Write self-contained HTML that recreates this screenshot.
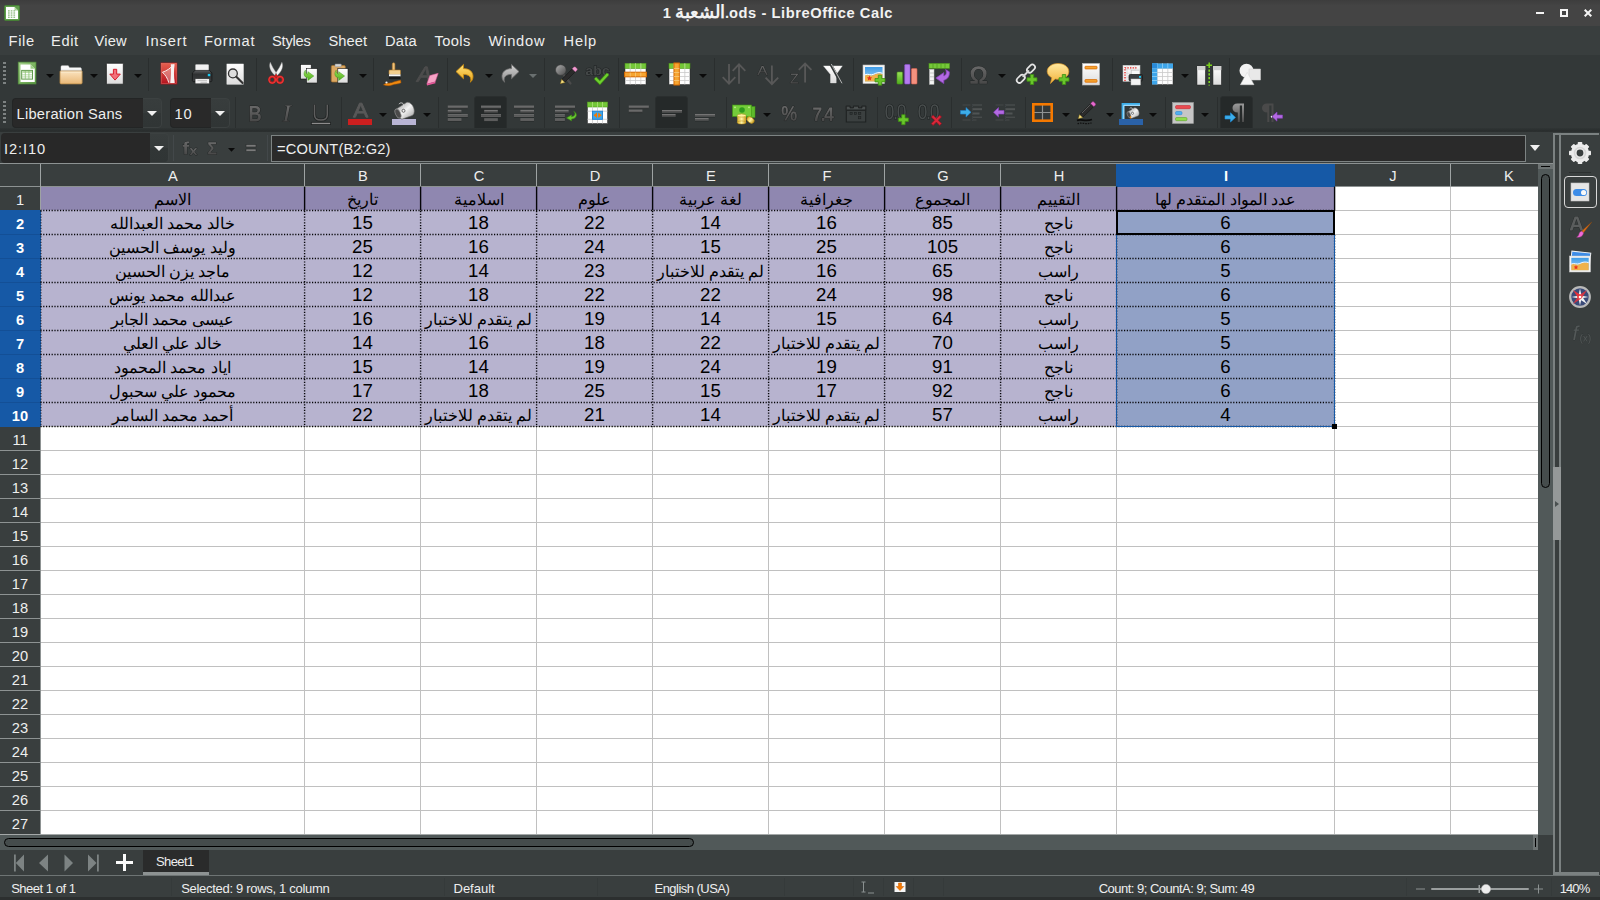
<!DOCTYPE html>
<html><head><meta charset="utf-8"><title>LibreOffice Calc</title>
<style>
*{box-sizing:border-box;margin:0;padding:0}
html,body{width:1600px;height:900px;overflow:hidden;background:#333838}
body{font-family:"Liberation Sans",sans-serif;color:#eeeeee;position:relative;font-size:14.67px}
.a{position:absolute}
.t{position:absolute;white-space:nowrap;line-height:1}
#title{left:0;top:0;width:1600px;height:26px;background:linear-gradient(#3d3d3d,#444 22%,#444)}
#menu{left:0;top:26px;width:1600px;height:29px;background:#393e3e}
#tb{left:0;top:55px;width:1600px;height:77px;background:#333838}
#fbar{left:0;top:132px;width:1561px;height:32px;background:#393e3e}
.sep{position:absolute;width:1px;background:#2a2e2e}
.arr{position:absolute;width:0;height:0;border-left:4px solid transparent;border-right:4px solid transparent;border-top:4px solid #0a0a0a}
.arrw{position:absolute;width:0;height:0;border-left:5.5px solid transparent;border-right:5.5px solid transparent;border-top:5.5px solid #f0f0f0}
.act{position:absolute;background:#252929;border:1px solid #2a2e2e;border-radius:3px}
.ic{position:absolute;width:24px;height:24px;overflow:visible}
.hc{position:absolute;top:164px;height:22px;padding-left:1px;background:#393e3e;text-align:center;font-size:14.67px;line-height:24px;color:#eee;overflow:hidden}
.rh{position:absolute;left:0;width:40px;height:23px;text-align:center;font-size:14.67px;line-height:26px;color:#eee;overflow:hidden}
.c{position:absolute;height:23px;text-align:center;color:#000;font-size:18.67px;line-height:23px;white-space:nowrap;overflow:hidden}
.c.ar{direction:rtl;font-size:16px;line-height:25px}
.st{position:absolute;top:882px;font-size:13px;white-space:nowrap;line-height:14px;color:#eee}
</style></head>
<body>
<svg width="0" height="0" style="position:absolute"><defs><linearGradient id="gPaper" x1="0" y1="0" x2="0" y2="1"><stop offset="0" stop-color="#ffffff"/><stop offset="1" stop-color="#dcdcdc"/></linearGradient>
<linearGradient id="gFold" x1="0" y1="0" x2="0" y2="1"><stop offset="0" stop-color="#fbe3bf"/><stop offset="1" stop-color="#e9b877"/></linearGradient>
<linearGradient id="gPdf" x1="0" y1="0" x2="0" y2="1"><stop offset="0" stop-color="#e8604f"/><stop offset="1" stop-color="#b3121f"/></linearGradient>
<linearGradient id="gUndo" x1="0" y1="0" x2="0" y2="1"><stop offset="0" stop-color="#ffe27a"/><stop offset="1" stop-color="#e8a317"/></linearGradient>
<linearGradient id="gRedo" x1="0" y1="0" x2="0" y2="1"><stop offset="0" stop-color="#d2d2d2"/><stop offset="1" stop-color="#8e8e8e"/></linearGradient>
<linearGradient id="gGreen" x1="0" y1="0" x2="0" y2="1"><stop offset="0" stop-color="#9be05a"/><stop offset="1" stop-color="#4fae1c"/></linearGradient>
<linearGradient id="gSky" x1="0" y1="0" x2="0" y2="1"><stop offset="0" stop-color="#3f9be6"/><stop offset="1" stop-color="#9fd4f4"/></linearGradient>
<linearGradient id="gBub" x1="0" y1="0" x2="0" y2="1"><stop offset="0" stop-color="#ffe9a0"/><stop offset="1" stop-color="#f2b33d"/></linearGradient>
<linearGradient id="gMetal" x1="0" y1="0" x2="1" y2="1"><stop offset="0" stop-color="#8c8c8c"/><stop offset="0.5" stop-color="#f4f4f4"/><stop offset="1" stop-color="#9a9a9a"/></linearGradient>
<linearGradient id="gBall" x1="0" y1="0" x2="1" y2="1"><stop offset="0" stop-color="#b0b0b0"/><stop offset="1" stop-color="#4a4a4a"/></linearGradient>
<linearGradient id="gNew" x1="0" y1="0" x2="1" y2="1"><stop offset="0" stop-color="#a5d08c"/><stop offset="0.5" stop-color="#7db562"/><stop offset="1" stop-color="#5a9644"/></linearGradient>
<linearGradient id="gPrn" x1="0" y1="0" x2="0" y2="1"><stop offset="0" stop-color="#5a5c5e"/><stop offset="0.35" stop-color="#2f3132"/><stop offset="1" stop-color="#3a3c3e"/></linearGradient>
<linearGradient id="gGray" x1="0" y1="0" x2="0" y2="1"><stop offset="0" stop-color="#686868"/><stop offset="1" stop-color="#484848"/></linearGradient>
<linearGradient id="gGold" x1="0" y1="0" x2="1" y2="0"><stop offset="0" stop-color="#d8b02a"/><stop offset="0.5" stop-color="#fff3a8"/><stop offset="1" stop-color="#c99a1a"/></linearGradient></defs></svg>
<div class="a" id="title">
<svg class="a" style="left:4px;top:5px" width="16" height="16" viewBox="0 0 16 16"><rect x="0.500" y="0.500" width="15" height="15" rx="1" fill="#5f9c4b" stroke="#467f36"/><path d="M2 2h8.500l3.500 3.500v8.500H2z" fill="#fff"/><path d="M10.500 2l3.500 3.500h-3.500z" fill="#a8d496"/><g fill="#6aa556"><rect x="4" y="5.400" width="1.700" height="1"/><rect x="6.700" y="5.400" width="1.700" height="1"/><rect x="9.400" y="5.400" width="1.700" height="1"/><rect x="4" y="7.500" width="1.700" height="1"/><rect x="6.700" y="7.500" width="1.700" height="1"/><rect x="9.400" y="7.500" width="1.700" height="1"/><rect x="4" y="9.600" width="1.700" height="1"/><rect x="6.700" y="9.600" width="1.700" height="1"/><rect x="9.400" y="9.600" width="1.700" height="1"/><rect x="4" y="11.700" width="1.700" height="1"/><rect x="6.700" y="11.700" width="1.700" height="1"/><rect x="9.400" y="11.700" width="1.700" height="1"/></g></svg>
<div class="t" id="ttl" style="right:707px;top:6px;font-weight:bold;font-size:14.67px;letter-spacing:0.57px;color:#f2f2f2"><span style="letter-spacing:0;font-size:17.6px;line-height:0">الشعبة</span> 1.ods - LibreOffice Calc</div>
<div class="a" style="left:1536px;top:12px;width:8px;height:2px;background:#f4f4f4"></div>
<div class="a" style="left:1560px;top:9px;width:8px;height:8px;border:2px solid #f4f4f4"></div>
<svg class="a" style="left:1584px;top:9px" width="8" height="8" viewBox="0 0 8 8"><path d="M0.7 0.7L7.3 7.3M7.3 0.7L0.7 7.3" stroke="#f4f4f4" stroke-width="2"/></svg>
</div>
<div class="a" id="menu">
<div class="t mi" style="left:8.5px;top:8px;letter-spacing:0.68px">File</div>
<div class="t mi" style="left:51.0px;top:8px;letter-spacing:0.61px">Edit</div>
<div class="t mi" style="left:94.5px;top:8px;letter-spacing:0.19px">View</div>
<div class="t mi" style="left:145.5px;top:8px;letter-spacing:0.88px">Insert</div>
<div class="t mi" style="left:204.0px;top:8px;letter-spacing:0.83px">Format</div>
<div class="t mi" style="left:272.0px;top:8px;letter-spacing:-0.22px">Styles</div>
<div class="t mi" style="left:328.5px;top:8px;letter-spacing:0.07px">Sheet</div>
<div class="t mi" style="left:385.0px;top:8px;letter-spacing:0.23px">Data</div>
<div class="t mi" style="left:434.5px;top:8px;letter-spacing:0.4px">Tools</div>
<div class="t mi" style="left:488.5px;top:8px;letter-spacing:0.79px">Window</div>
<div class="t mi" style="left:563.5px;top:8px;letter-spacing:0.84px">Help</div>
</div>
<div class="a" id="tb">
<div class="a" style="left:3px;top:7px;width:3px;height:23px;background:repeating-linear-gradient(#7d8282 0 2px,transparent 2px 4px)"></div>
<div class="a" style="left:3px;top:46px;width:3px;height:23px;background:repeating-linear-gradient(#7d8282 0 2px,transparent 2px 4px)"></div>
<svg class="ic" style="left:15px;top:7px" viewBox="0 0 24 24"><rect x="3.200" y="0.100" width="17.800" height="21.900" fill="url(#gNew)" stroke="#4f8a3a" stroke-width="0.700"/><path d="M5.500 2.400h10l4.250 4.250V20H5.500z" fill="#fff"/><path d="M15.500 2.400l4.250 4.250H15.500z" fill="#9fcf88"/><rect x="6.700" y="8.400" width="10.800" height="8.700" fill="#fff" stroke="#5f9a4a" stroke-width="1"/><rect x="7.200" y="8.900" width="9.800" height="2" fill="#b9dba6"/><path d="M7 12.800h10.200M7 14.900h10.200" stroke="#a9d396" stroke-width="0.800"/><path d="M10.300 9v8M13.900 9v8" stroke="#8cc474" stroke-width="0.800"/></svg>
<div class="arr" style="left:45.5px;top:19px"></div>
<svg class="ic" style="left:59px;top:7px" viewBox="0 0 24 24"><path d="M2 5c0-.8.400-1.300 1-1.300h6.300l1.200 2H21.300c.6 0 1 .4 1 1V10H2z" fill="#fbfbfb" stroke="#dcdcdc" stroke-width="0.500"/><path d="M2 7.500h20.300V10H2z" fill="#e4e6ea"/><path d="M1.600 9h21c.3 0 .5.200.5.500V21c0 .5-.4.900-1 .900H2c-.6 0-1-.4-1-.9V9.500c0-.3.300-.5.600-.5z" fill="url(#gFold)" stroke="#b98c4a" stroke-width="0.800"/><path d="M1.800 10.100h20.500" stroke="#fdf0d8" stroke-width="0.700"/></svg>
<div class="arr" style="left:89.7px;top:19px"></div>
<svg class="ic" style="left:103px;top:7px" viewBox="0 0 24 24"><rect x="3.400" y="1.300" width="16.900" height="20.900" rx="0.800" fill="url(#gPaper)" stroke="#151717" stroke-width="0.700"/><path d="M10.400 7.300h3.300v4.800h3.600l-5.250 6-5.250-6h3.600z" fill="#f2707a" stroke="#d81c2c" stroke-width="1" stroke-linejoin="round"/></svg>
<div class="arr" style="left:133.6px;top:19px"></div>
<div class="sep" style="left:148px;top:3px;height:33px"></div>
<svg class="ic" style="left:157px;top:7px" viewBox="0 0 24 24"><rect x="3.900" y="0.900" width="16.100" height="21.200" fill="url(#gPdf)" stroke="#9e1420" stroke-width="0.600"/><rect x="4.700" y="1.700" width="14.500" height="19.600" fill="none" stroke="#f08a78" stroke-width="0.500" opacity="0.700"/><path d="M17 2.300C14 6 10 8.500 5.400 10.300c3 2.500 5 6 6.300 10.500l6-.2c-1-6-1-12 0-18.300z" fill="#fff" opacity="0.300"/><path d="M13.800 2.200c1-.1 2.800-.1 3.700 0-.8 6-.7 12.500.2 18.800l-4.500.1c.9-6 1-12.500.6-18.900z" fill="#f8f0f0"/><path d="M16.500 2.500C14 6 10 8.700 5.400 10.300c3 2.400 5.200 6 6.400 10.400" fill="none" stroke="#fbeaea" stroke-width="1"/></svg>
<svg class="ic" style="left:190px;top:7px" viewBox="0 0 24 24"><rect x="5.800" y="2.800" width="12.600" height="6.500" fill="#f2f2f2" stroke="#fdfdfd" stroke-width="0.500"/><path d="M5 8.400h14.500l2.400 2.500v7.700c0 .6-.4 1-1 1H3.400c-.6 0-1-.4-1-1v-7.700z" fill="url(#gPrn)" stroke="#111313" stroke-width="0.700"/><rect x="17.800" y="11.900" width="2.500" height="2.300" fill="#19c8f0"/><rect x="5.100" y="16.800" width="14.200" height="5" fill="#f4f4f4" stroke="#2a2c2c" stroke-width="0.500"/><path d="M7.500 18.600h9.500M10.500 20.300h6.500" stroke="#b8b8b8" stroke-width="0.800"/></svg>
<svg class="ic" style="left:223px;top:7px" viewBox="0 0 24 24"><rect x="3.900" y="2" width="16.500" height="20.200" fill="url(#gPaper)" stroke="#f4f4f4" stroke-width="0.500"/><circle cx="9.900" cy="11.400" r="4.400" fill="#dedede" stroke="#333" stroke-width="1.300"/><path d="M13.300 14.800l6.300 6.300" stroke="#333" stroke-width="2.100" stroke-linecap="round"/></svg>
<div class="sep" style="left:255.5px;top:3px;height:33px"></div>
<svg class="ic" style="left:264px;top:7px" viewBox="0 0 24 24"><path d="M6.300 0.200c-1.600 3.500-.5 8.500 4.700 13.300l1.700-2C10 7.500 7.600 3.500 6.300 0.200z" fill="#e6e6e6" stroke="#9a9a9a" stroke-width="0.400"/><path d="M17.900 0.200c1.600 3.500.5 8.500-4.700 13.300l-1.700-2c2.700-4 5.100-8 6.400-11.300z" fill="#f6f6f6" stroke="#9a9a9a" stroke-width="0.400"/><path d="M11.400 11.200h1.400v4h-1.400z" fill="#7a7a7a"/><g fill="none" stroke="#d41818" stroke-width="2.300"><ellipse cx="8.200" cy="17.800" rx="3" ry="3.100"/><ellipse cx="16" cy="17.800" rx="3" ry="3.100"/></g><g fill="none" stroke="#f05a5a" stroke-width="0.600"><ellipse cx="8.200" cy="17.800" rx="3.300" ry="3.400"/><ellipse cx="16" cy="17.800" rx="3.300" ry="3.400"/></g><path d="M10.600 15.300l1.500-2.200 1.500 2.200" fill="none" stroke="#d41818" stroke-width="1.600"/></svg>
<svg class="ic" style="left:297px;top:7px" viewBox="0 0 24 24"><rect x="3.600" y="2.500" width="10.600" height="14.500" fill="url(#gPaper)" stroke="#151717" stroke-width="0.600"/><rect x="9.500" y="6.600" width="10.700" height="14.400" fill="url(#gPaper)" stroke="#151717" stroke-width="0.600"/><path d="M1.800 0C-0.600 3 0.300 7.300 4.300 7.600V10.200L10.200 5.800 4.300 1.500v2.400C2.900 3.700 1.500 2.300 1.800 0z" transform="translate(6.6 8.2)" fill="url(#gGreen)" stroke="#3f9a18" stroke-width="0.500" stroke-linejoin="round"/></svg>
<svg class="ic" style="left:330px;top:7px" viewBox="0 0 24 24"><rect x="1.300" y="3.500" width="14" height="16.500" rx="1.200" fill="#dca862" stroke="#a8722d" stroke-width="0.700"/><rect x="5" y="2" width="6.300" height="2.800" rx="0.600" fill="#d4d4d4" stroke="#8a8a8a" stroke-width="0.500"/><rect x="7.800" y="6.600" width="10.200" height="14.400" fill="url(#gPaper)" stroke="#151717" stroke-width="0.600"/><path d="M1.800 0C-0.600 3 0.300 7.300 4.300 7.600V10.200L10.200 5.800 4.300 1.500v2.400C2.900 3.700 1.500 2.300 1.800 0z" transform="translate(4.4 8.2)" fill="url(#gGreen)" stroke="#3f9a18" stroke-width="0.500" stroke-linejoin="round"/></svg>
<div class="arr" style="left:358.8px;top:19px"></div>
<div class="sep" style="left:373px;top:3px;height:33px"></div>
<svg class="ic" style="left:382px;top:7px" viewBox="0 0 24 24"><rect x="10.300" y="0.800" width="2.600" height="8" rx="1.300" fill="#f1c27a" stroke="#b27a2a" stroke-width="0.6"/><rect x="7" y="8" width="11.500" height="4.500" rx="0.800" fill="#f3cf8e" stroke="#b27a2a" stroke-width="0.6"/><rect x="7" y="12.300" width="11.500" height="2.200" fill="#f6f6f6"/><rect x="7" y="14.500" width="11.500" height="2.600" fill="#1a1a1a"/><path d="M1.500 22.800c3-2.600 6-1 9-2.400 2.500-1.200 5-1.200 8-2.200l.5 2.600c-3 1.600-6 .8-9 2.200-2.500 1-5.500.8-8.500-.2z" fill="#f08a10" stroke="#b85a00" stroke-width="0.5"/><circle cx="4.500" cy="20.500" r="1.100" fill="#f4f4f4"/></svg>
<svg class="ic" style="left:416px;top:7px" viewBox="0 0 24 24"><path d="M12.34 19.6 11.55 15.27H4.84L2.32 19.6H0.14L9.04 4.81H11.32L14.39 19.6ZM9.91 6.32Q9.78 6.59 9.52 7.04Q9.27 7.5 5.72 13.71H11.26L10.19 7.91Z" fill="#4c4c4c" stroke="#4c4c4c" stroke-width="1.0" paint-order="stroke" stroke-linejoin="round"/><path d="M13.800 13.600l8.400-2.300-3 8.500-8.400 2.300z" fill="#f7a3c6" stroke="#e2589a" stroke-width="0.500"/><path d="M10.800 22.100l8.400-2.300.3 1.500-8.400 2.300z" fill="#e8579a"/></svg>
<div class="sep" style="left:447px;top:3px;height:33px"></div>
<svg class="ic" style="left:453px;top:7px" viewBox="0 0 24 24"><path d="M10.500 2.400v4.200c6 0 9.800 3.400 9.500 8.400-.2 2.500-1.300 4.200-2.700 5.200.8-2 .8-4.200-.7-5.800-1.400-1.500-3.500-2-6.100-2v4.400L3 9.600z" fill="url(#gUndo)" stroke="#c98a10" stroke-width="0.8" stroke-linejoin="round"/></svg>
<div class="arr" style="left:484.6px;top:19px"></div>
<svg class="ic" style="left:498px;top:7px" viewBox="0 0 24 24"><path d="M13.500 2.400v4.200c-6 0-9.800 3.400-9.500 8.400.2 2.500 1.300 4.200 2.700 5.200-.8-2-.8-4.200.7-5.800 1.400-1.500 3.500-2 6.100-2v4.400L21 9.600z" fill="url(#gRedo)" stroke="#6d6d6d" stroke-width="0.8" stroke-linejoin="round"/></svg>
<div class="arr" style="left:528.5px;top:19px;border-top-color:#6a7070"></div>
<div class="sep" style="left:543.5px;top:3px;height:33px"></div>
<svg class="ic" style="left:554px;top:7px" viewBox="0 0 24 24"><path d="M9 12l7.500 9.500" stroke="#4b4b4b" stroke-width="2.200" stroke-linecap="round"/><circle cx="6.800" cy="8" r="5.300" fill="url(#gBall)" stroke="#3a3a3a" stroke-width="0.6"/><path d="M6.500 21.500l1.200-4L18.300 6.800l3 3L10.600 20.400z" fill="#2b2b2b" stroke="#111" stroke-width="0.5"/><path d="M18.300 6.800l1.500-1.500c.5-.5 1.300-.5 1.800 0l1.200 1.200c.5.500.5 1.300 0 1.800l-1.500 1.500z" fill="#f19cd0" stroke="#c868a6" stroke-width="0.5"/><path d="M6.500 21.500l1.200-4 3 3z" fill="#f6e08a" stroke="#b89a2a" stroke-width="0.5"/></svg>
<svg class="ic" style="left:585px;top:7px" viewBox="0 0 24 24"><path d="M3.08 13.33Q2.01 13.33 1.41 12.78Q0.81 12.23 0.81 11.23Q0.81 10.14 1.56 9.58Q2.31 9.01 3.73 9L5.32 8.97V8.62Q5.32 7.93 5.07 7.6Q4.81 7.27 4.24 7.27Q3.71 7.27 3.46 7.5Q3.21 7.73 3.15 8.26L1.14 8.17Q1.33 7.15 2.13 6.62Q2.93 6.1 4.32 6.1Q5.72 6.1 6.48 6.75Q7.24 7.4 7.24 8.6V11.14Q7.24 11.72 7.38 11.95Q7.52 12.17 7.85 12.17Q8.07 12.17 8.27 12.13V13.11Q8.1 13.15 7.96 13.18Q7.83 13.21 7.69 13.23Q7.55 13.25 7.4 13.26Q7.25 13.28 7.04 13.28Q6.32 13.28 5.97 12.94Q5.63 12.61 5.56 11.96H5.52Q4.71 13.33 3.08 13.33ZM5.32 9.97 4.34 9.98Q3.67 10.01 3.39 10.12Q3.11 10.24 2.96 10.47Q2.81 10.7 2.81 11.09Q2.81 11.58 3.05 11.82Q3.3 12.07 3.7 12.07Q4.15 12.07 4.52 11.83Q4.9 11.6 5.11 11.19Q5.32 10.78 5.32 10.33ZM16.25 9.69Q16.25 11.41 15.52 12.37Q14.79 13.33 13.42 13.33Q12.63 13.33 12.06 13.01Q11.49 12.68 11.18 12.08H11.16Q11.16 12.3 11.13 12.7Q11.1 13.09 11.07 13.2H9.2Q9.26 12.6 9.26 11.61V3.64H11.18V6.3L11.15 7.44H11.18Q11.83 6.1 13.54 6.1Q14.85 6.1 15.55 7.04Q16.25 7.97 16.25 9.69ZM14.25 9.69Q14.25 8.5 13.88 7.93Q13.52 7.35 12.74 7.35Q11.96 7.35 11.56 7.97Q11.15 8.59 11.15 9.75Q11.15 10.85 11.55 11.47Q11.95 12.09 12.73 12.09Q14.25 12.09 14.25 9.69ZM20.99 13.33Q19.31 13.33 18.39 12.38Q17.48 11.44 17.48 9.75Q17.48 8.02 18.4 7.06Q19.32 6.1 21.01 6.1Q22.32 6.1 23.17 6.72Q24.03 7.33 24.25 8.42L22.31 8.51Q22.23 7.98 21.9 7.66Q21.57 7.34 20.97 7.34Q19.49 7.34 19.49 9.68Q19.49 12.09 21 12.09Q21.55 12.09 21.92 11.77Q22.28 11.44 22.37 10.8L24.3 10.88Q24.2 11.6 23.76 12.16Q23.32 12.72 22.6 13.02Q21.88 13.33 20.99 13.33Z" fill="#444848" stroke="#222526" stroke-width="1.1" paint-order="stroke" stroke-linejoin="round"/><path d="M10.200 16l4.700 4.700 8-8.800" fill="none" stroke="#3d8f12" stroke-width="3.600"/><path d="M10.200 16l4.700 4.700 8-8.800" fill="none" stroke="#6fcf30" stroke-width="2.200"/></svg>
<div class="sep" style="left:617.5px;top:3px;height:33px"></div>
<svg class="ic" style="left:624px;top:7px" viewBox="0 0 24 24"><rect x="1" y="1.5" width="21" height="21" fill="#fdfdfd" stroke="#2b2b2b" stroke-width="0.500"/><rect x="1" y="1.500" width="21" height="5" fill="#74c738" stroke="#4f9a1c" stroke-width="0.600"/><path d="M6.200 1.500v21M11.500 1.500v21M16.800 1.500v21M1 10.500h21M1 14.500h21M1 18.500h21" stroke="#c9c9c9" stroke-width="0.800"/><path d="M6.200 1.500v5M11.500 1.500v5M16.800 1.500v5" stroke="#9be05a" stroke-width="0.800"/><rect x="0.600" y="10.200" width="21.800" height="4.600" fill="#f6a531" stroke="#d96a00" stroke-width="1"/><path d="M6.200 10.500v4M11.500 10.500v4M16.800 10.500v4" stroke="#f8c87a" stroke-width="0.800"/></svg>
<div class="arr" style="left:654.5px;top:19px"></div>
<svg class="ic" style="left:668px;top:7px" viewBox="0 0 24 24"><rect x="1" y="1.5" width="21" height="21" fill="#fdfdfd" stroke="#2b2b2b" stroke-width="0.500"/><rect x="1" y="1.500" width="21" height="5" fill="#74c738" stroke="#4f9a1c" stroke-width="0.600"/><path d="M6.200 1.500v21M11.500 1.500v21M16.800 1.500v21M1 10.500h21M1 14.500h21M1 18.500h21" stroke="#c9c9c9" stroke-width="0.800"/><path d="M6.200 1.500v5M11.500 1.500v5M16.800 1.500v5" stroke="#9be05a" stroke-width="0.800"/><rect x="6" y="1" width="5.300" height="22" fill="#f6a531" stroke="#d96a00" stroke-width="1"/><path d="M6 6.500h5.300M6 10.500h5.300M6 14.500h5.300M6 18.500h5.300" stroke="#f8c87a" stroke-width="0.800"/></svg>
<div class="arr" style="left:698.5px;top:19px"></div>
<div class="sep" style="left:713.7px;top:3px;height:33px"></div>
<svg class="ic" style="left:722px;top:7px" viewBox="0 0 24 24"><g fill="none" stroke="#585858" stroke-width="1.800"><path d="M7 2.100V21.400M0.700 15.200l6.300 6.400 6.300-6.400"/><path d="M17 21.800V2.500M10.700 8.800l6.300-6.400 6.300 6.400"/></g></svg>
<svg class="ic" style="left:756px;top:7px" viewBox="0 0 24 24"><path d="M10.23 13 8.98 10.34H4.02L2.76 13H1.23L5.68 3.92H7.36L11.73 13ZM6.5 4.85 6.43 5.03Q6.24 5.56 5.86 6.4L4.46 9.38H8.54L7.14 6.39Q6.92 5.94 6.71 5.38Z" fill="url(#gGray)" stroke="#202323" stroke-width="0.7" paint-order="stroke" stroke-linejoin="round"/><g fill="none" stroke="#585858" stroke-width="1.800"><path d="M15.900 3.400V21.800M9.600 15.700l6.300 6.400 6.300-6.400"/></g></svg>
<svg class="ic" style="left:789px;top:7px" viewBox="0 0 24 24"><path d="M9.23 21.4H1.45V20.41L7.4 12.71H1.96V11.63H8.9V12.59L2.96 20.32H9.23Z" fill="url(#gGray)" stroke="#202323" stroke-width="0.7" paint-order="stroke" stroke-linejoin="round"/><g fill="none" stroke="#585858" stroke-width="1.800"><path d="M16.100 20.500V1.600M9.800 7.900l6.300-6.400 6.300 6.400"/></g></svg>
<svg class="ic" style="left:821px;top:7px" viewBox="0 0 24 24"><path d="M2.500 3.900h18.800l-6.100 8.700v8.300H9.500v-8.300z" fill="url(#gPaper)" stroke="#e4e4e4" stroke-width="0.400"/><path d="M9.400 1.800l10.800 19.500" stroke="#333838" stroke-width="2.600"/><path d="M10.300 2l10.700 19.300" stroke="#c4c4c4" stroke-width="0.900"/></svg>
<div class="sep" style="left:853px;top:3px;height:33px"></div>
<svg class="ic" style="left:862px;top:7px" viewBox="0 0 24 24"><rect x="1" y="3" width="21.500" height="18.500" fill="#f4f4f4" stroke="#bcbcbc" stroke-width="0.600"/><rect x="3" y="5" width="17.500" height="14.500" fill="url(#gSky)"/><path d="M3 13.500c3-1.500 5.500 1 8.500-.5s5.500-2.500 9-1v7.500H3z" fill="#f0b24a"/><path d="M3 12.800c3-1.500 5.500 1 8.500-.5s5.500-2.500 9-1" stroke="#fff" stroke-width="1" fill="none"/><path d="M7.500 13.500l.8 1.700 1.800.2-1.300 1.300.3 1.800-1.600-.9-1.600.9.300-1.800-1.300-1.300 1.800-.2z" fill="#e8301c"/><path d="M16.3 13.2h3.4v3.3h3.3v3.4h-3.3v3.3h-3.4v-3.3h-3.3v-3.4h3.3z" fill="#69c52b" stroke="#3d8f12" stroke-width="0.8"/></svg>
<svg class="ic" style="left:895px;top:7px" viewBox="0 0 24 24"><rect x="2" y="10" width="5.500" height="12" rx="0.800" fill="url(#gGreen)" stroke="#4a9a1a" stroke-width="0.600"/><rect x="9.700" y="2.500" width="5.300" height="19.500" rx="0.800" fill="#b57bee" stroke="#8a4fd0" stroke-width="0.600"/><rect x="16.500" y="6.500" width="5.500" height="15.500" rx="0.800" fill="#f4917f" stroke="#d8604f" stroke-width="0.600"/></svg>
<svg class="ic" style="left:928px;top:7px" viewBox="0 0 24 24"><rect x="1" y="1.500" width="20.500" height="4.800" fill="#74c738" stroke="#4f9a1c" stroke-width="0.600"/><path d="M5 1.500v4.800M9 1.500v4.800M13 1.500v4.800M17 1.500v4.800" stroke="#4f9a1c" stroke-width="0.700"/><rect x="1.500" y="7.300" width="4.500" height="15" fill="#f4f4f4" stroke="#c0c0c0" stroke-width="0.500"/><path d="M1.500 11h4.500M1.500 14.800h4.500M1.500 18.600h4.500" stroke="#b0b0b0" stroke-width="0.700"/><path d="M17.500 7.500l3.800 2.300c.5 4-1.500 7.500-5.500 8.500v3.300l-8-5.500 8-5.500v3.300c2.500-.5 3.200-3.400 1.700-6.400z" fill="#b36ae2" stroke="#8a3fc0" stroke-width="0.700" stroke-linejoin="round"/></svg>
<div class="sep" style="left:960.5px;top:3px;height:33px"></div>
<svg class="ic" style="left:967px;top:7px" viewBox="0 0 24 24"><path d="M11.62 4.24Q15.35 4.24 17.47 6.21Q19.59 8.17 19.59 11.59Q19.59 14.2 18.4 16.04Q17.21 17.87 14.81 19.05Q16.09 18.92 16.81 18.92H19.91V21.7H12.37V17.93Q14.41 16.88 15.32 15.47Q16.22 14.06 16.22 12.25Q16.22 9.77 15.01 8.42Q13.8 7.08 11.6 7.08Q9.41 7.08 8.18 8.42Q6.96 9.76 6.96 12.25Q6.96 14.06 7.87 15.47Q8.79 16.88 10.82 17.93V21.7H3.33V18.92H6.41Q7.16 18.92 8.4 19.05Q5.97 17.85 4.81 16.02Q3.65 14.18 3.65 11.58Q3.65 8.15 5.77 6.2Q7.89 4.24 11.62 4.24Z" fill="url(#gGray)" stroke="#202323" stroke-width="0.8" paint-order="stroke" stroke-linejoin="round"/></svg>
<div class="arr" style="left:997.5px;top:19px"></div>
<svg class="ic" style="left:1014px;top:7px" viewBox="0 0 24 24"><g fill="none" stroke="#e4e4e4" stroke-width="1.700"><rect x="-2.700" y="-4.600" width="5.400" height="9.200" rx="2.700" transform="translate(17 6.600) rotate(45)"/><rect x="-2.700" y="-4.600" width="5.400" height="9.200" rx="2.700" transform="translate(6.800 16.800) rotate(45)"/></g><path d="M9.300 14.300l5.200-5.200" stroke="#d8d8d8" stroke-width="2" stroke-linecap="round"/><path d="M16.3 12.5h3.4v3.3h3.3v3.4h-3.3v3.3h-3.4v-3.3h-3.3v-3.4h3.3z" fill="#69c52b" stroke="#3d8f12" stroke-width="0.8"/></svg>
<svg class="ic" style="left:1046px;top:7px" viewBox="0 0 24 24"><path d="M12 1.500c6 0 10.800 3.400 10.800 8s-4.300 7.600-10.300 7.800c-1.200 0-2.300-.1-3.300-.4L4.500 21.500l1.300-5.800C3 14.300 1.200 12 1.200 9.500c0-4.600 4.800-8 10.800-8z" fill="url(#gBub)" stroke="#d9962a" stroke-width="0.700"/><path d="M16.3 12.5h3.4v3.3h3.3v3.4h-3.3v3.3h-3.4v-3.3h-3.3v-3.4h3.3z" fill="#69c52b" stroke="#3d8f12" stroke-width="0.8"/></svg>
<svg class="ic" style="left:1079px;top:7px" viewBox="0 0 24 24"><rect x="3.500" y="1.500" width="17" height="21.500" fill="url(#gPaper)" stroke="#bdbdbd" stroke-width="0.600"/><rect x="6" y="4.300" width="12" height="2.600" rx="0.600" fill="#f6a531" stroke="#d96a00" stroke-width="0.800"/><rect x="6" y="17.600" width="12" height="2.600" rx="0.600" fill="#f6a531" stroke="#d96a00" stroke-width="0.800"/></svg>
<div class="sep" style="left:1111.5px;top:3px;height:33px"></div>
<svg class="ic" style="left:1121px;top:7px" viewBox="0 0 24 24"><rect x="2" y="3.300" width="17" height="16" fill="#f6f6f6" stroke="#c8c8c8" stroke-width="0.500"/><path d="M6 3.300v16M10 3.300v16M14 3.300v16M2 7.300h17M2 11.300h17M2 15.300h17" stroke="#d6d6d6" stroke-width="0.700"/><path d="M4 19V5.800h12.500" fill="none" stroke="#e8201c" stroke-width="1.300" stroke-dasharray="1.300 1.300"/><rect x="10.500" y="8.500" width="8" height="5" fill="#f8f8f8" stroke="#c0c0c0" stroke-width="0.500"/><rect x="8" y="12.500" width="13.500" height="6.500" rx="1.200" fill="#3b3f42" stroke="#141616" stroke-width="0.700"/><rect x="18" y="14" width="2" height="1.800" fill="#19c8f0"/><rect x="10" y="17" width="9.500" height="6" fill="#f4f4f4" stroke="#bdbdbd" stroke-width="0.500"/></svg>
<svg class="ic" style="left:1151px;top:7px" viewBox="0 0 24 24"><rect x="1" y="1.500" width="21" height="21" fill="#fdfdfd" stroke="#2b2b2b" stroke-width="0.500"/><path d="M6.200 1.500v21M11.500 1.500v21M16.800 1.500v21M1 6.500h21M1 10.500h21M1 14.500h21M1 18.500h21" stroke="#c9c9c9" stroke-width="0.800"/><rect x="1" y="1.500" width="21" height="5" fill="#3da5ea"/><rect x="1" y="1.500" width="5.200" height="21" fill="#3da5ea"/><path d="M6.200 1.500v5M11.500 1.500v5M16.800 1.500v5M1 6.500h5.200M1 10.500h5.200M1 14.500h5.200M1 18.500h5.200" stroke="#8fd0f8" stroke-width="0.800"/><rect x="1" y="1.500" width="5.200" height="5" fill="#2a8ad8"/></svg>
<div class="arr" style="left:1181.4px;top:19px"></div>
<svg class="ic" style="left:1197px;top:7px" viewBox="0 0 24 24"><rect x="0" y="4" width="8.300" height="19" fill="url(#gPaper)" stroke="#2b2b2b" stroke-width="0.500"/><rect x="0" y="4" width="8.300" height="4.200" fill="#cfcfcf"/><rect x="16" y="4" width="8.300" height="19" fill="url(#gPaper)" stroke="#2b2b2b" stroke-width="0.500"/><rect x="16" y="4" width="8.300" height="4.200" fill="#cfcfcf"/><path d="M12.200 7.500v16" stroke="#7cd31c" stroke-width="1.600" stroke-dasharray="2.200 1.600"/><path d="M12.200 0.500v5.600M9.400 3.300h5.600" stroke="#7cd31c" stroke-width="1.500"/></svg>
<div class="sep" style="left:1229.4px;top:3px;height:33px"></div>
<svg class="ic" style="left:1238px;top:7px" viewBox="0 0 24 24"><circle cx="8.500" cy="8.800" r="7" fill="#f2f2f2"/><rect x="11" y="7" width="11.500" height="11" fill="#e9e9e9" stroke="#cfcfcf" stroke-width="0.500"/><path d="M9.200 10.200l6.800 12.500H2.400z" fill="#f6f6f6" stroke="#d8d8d8" stroke-width="0.500"/></svg>
<div class="sep" style="left:235px;top:42px;height:33px"></div>
<svg class="ic" style="left:243px;top:46px" viewBox="0 0 24 24"><path d="M17.84 16.06Q17.84 18.18 16.56 19.34Q15.29 20.5 13.03 20.5H6.81V4.95H12.5Q14.78 4.95 15.95 5.94Q17.12 6.93 17.12 8.86Q17.12 10.18 16.53 11.09Q15.95 12 14.75 12.32Q16.26 12.54 17.05 13.51Q17.84 14.47 17.84 16.06ZM14.5 9.3Q14.5 8.25 13.96 7.81Q13.43 7.37 12.38 7.37H9.41V11.22H12.4Q13.5 11.22 14 10.74Q14.5 10.26 14.5 9.3ZM15.22 15.81Q15.22 13.63 12.72 13.63H9.41V18.08H12.81Q14.07 18.08 14.64 17.51Q15.22 16.95 15.22 15.81Z" fill="url(#gGray)" stroke="#202323" stroke-width="0.9" paint-order="stroke" stroke-linejoin="round"/></svg>
<svg class="ic" style="left:276px;top:46px" viewBox="0 0 24 24"><path d="M11.04 19.54 13.12 19.87 13.02 20.5H6.3L6.4 19.87L8.61 19.54L11.21 5.4L9.13 5.09L9.23 4.46H15.97L15.87 5.09L13.64 5.4Z" fill="url(#gGray)" stroke="#202323" stroke-width="0.9" paint-order="stroke" stroke-linejoin="round"/></svg>
<svg class="ic" style="left:309px;top:46px" viewBox="0 0 24 24"><path d="M5.500 3.800v9.700c0 3.800 2.400 5.600 6.400 5.600s6.400-1.800 6.400-5.600V3.800" fill="none" stroke="#202323" stroke-width="3"/><path d="M5.500 3.800v9.700c0 3.800 2.400 5.600 6.400 5.600s6.400-1.800 6.400-5.600V3.800" fill="none" stroke="#5e5e5e" stroke-width="1.500"/><rect x="2.300" y="21.300" width="19.300" height="2.300" fill="#8c8c8c" stroke="#202323" stroke-width="0.800"/></svg>
<div class="sep" style="left:341px;top:42px;height:33px"></div>
<svg class="ic" style="left:348px;top:46px" viewBox="0 0 24 24"><path d="M17.99 16.2 16.22 12.1H9.19L7.41 16.2H5.24L11.54 2.17H13.92L20.12 16.2ZM12.71 3.6 12.61 3.88Q12.33 4.71 11.8 6L9.82 10.61H15.6L13.62 5.98Q13.31 5.29 13 4.43Z" fill="#585858" stroke="#585858" stroke-width="1.0" paint-order="stroke" stroke-linejoin="round"/><rect x="0" y="18" width="24" height="6" fill="#cc1f1f"/></svg>
<div class="arr" style="left:378.6px;top:58px"></div>
<svg class="ic" style="left:392px;top:46px" viewBox="0 0 24 24"><rect x="0" y="18" width="24" height="6" fill="#b9b5d5"/><path d="M9.500 17l-1.400-4 1.400-2 1.400 2z" fill="#f08a10"/><path d="M3.500 8.500l11-7c3-1.200 6.500 2.500 7.500 6.500.8 3.300-.3 5.800-1.800 6.500l-9.700 3.500c-1 .3-1.800-.2-2.300-1z" fill="url(#gMetal)" stroke="#6a6a6a" stroke-width="0.600"/><ellipse cx="6" cy="12.600" rx="2.500" ry="5" transform="rotate(-24 6 12.600)" fill="#4a4a4a" stroke="#9a9a9a" stroke-width="0.600"/><path d="M11.500 9.500V4c0-2.500-3.600-2.800-4.500-.8" fill="none" stroke="#d8d8d8" stroke-width="0.900"/><circle cx="11.500" cy="9.800" r="1.500" fill="#f4f4f4" stroke="#3a3a3a" stroke-width="0.700"/></svg>
<div class="arr" style="left:422.6px;top:58px"></div>
<div class="sep" style="left:437.7px;top:42px;height:33px"></div>
<svg class="ic" style="left:446px;top:46px" viewBox="0 0 24 24"><rect x="1.80" y="4.60" width="20.00" height="1.3" fill="#747474"/><rect x="1.80" y="5.90" width="20.00" height="1.5" fill="#5c5c5c"/><rect x="1.80" y="7.40" width="20.00" height="0.7" fill="#262a2a"/><rect x="1.80" y="8.90" width="13.60" height="1.3" fill="#747474"/><rect x="1.80" y="10.20" width="13.60" height="1.5" fill="#5c5c5c"/><rect x="1.80" y="11.70" width="13.60" height="0.7" fill="#262a2a"/><rect x="1.80" y="13.20" width="20.00" height="1.3" fill="#747474"/><rect x="1.80" y="14.50" width="20.00" height="1.5" fill="#5c5c5c"/><rect x="1.80" y="16.00" width="20.00" height="0.7" fill="#262a2a"/><rect x="1.80" y="17.40" width="13.60" height="1.3" fill="#747474"/><rect x="1.80" y="18.70" width="13.60" height="1.5" fill="#5c5c5c"/><rect x="1.80" y="20.20" width="13.60" height="0.7" fill="#262a2a"/></svg>
<div class="act" style="left:474px;top:41px;width:33px;height:34px"></div>
<svg class="ic" style="left:479px;top:46px" viewBox="0 0 24 24"><rect x="2.00" y="4.60" width="20.00" height="1.3" fill="#747474"/><rect x="2.00" y="5.90" width="20.00" height="1.5" fill="#5c5c5c"/><rect x="2.00" y="7.40" width="20.00" height="0.7" fill="#262a2a"/><rect x="5.20" y="8.90" width="13.60" height="1.3" fill="#747474"/><rect x="5.20" y="10.20" width="13.60" height="1.5" fill="#5c5c5c"/><rect x="5.20" y="11.70" width="13.60" height="0.7" fill="#262a2a"/><rect x="2.00" y="13.20" width="20.00" height="1.3" fill="#747474"/><rect x="2.00" y="14.50" width="20.00" height="1.5" fill="#5c5c5c"/><rect x="2.00" y="16.00" width="20.00" height="0.7" fill="#262a2a"/><rect x="5.20" y="17.40" width="13.60" height="1.3" fill="#747474"/><rect x="5.20" y="18.70" width="13.60" height="1.5" fill="#5c5c5c"/><rect x="5.20" y="20.20" width="13.60" height="0.7" fill="#262a2a"/></svg>
<svg class="ic" style="left:512px;top:46px" viewBox="0 0 24 24"><rect x="2.00" y="4.60" width="20.00" height="1.3" fill="#747474"/><rect x="2.00" y="5.90" width="20.00" height="1.5" fill="#5c5c5c"/><rect x="2.00" y="7.40" width="20.00" height="0.7" fill="#262a2a"/><rect x="8.40" y="8.90" width="13.60" height="1.3" fill="#747474"/><rect x="8.40" y="10.20" width="13.60" height="1.5" fill="#5c5c5c"/><rect x="8.40" y="11.70" width="13.60" height="0.7" fill="#262a2a"/><rect x="2.00" y="13.20" width="20.00" height="1.3" fill="#747474"/><rect x="2.00" y="14.50" width="20.00" height="1.5" fill="#5c5c5c"/><rect x="2.00" y="16.00" width="20.00" height="0.7" fill="#262a2a"/><rect x="8.40" y="17.40" width="13.60" height="1.3" fill="#747474"/><rect x="8.40" y="18.70" width="13.60" height="1.5" fill="#5c5c5c"/><rect x="8.40" y="20.20" width="13.60" height="0.7" fill="#262a2a"/></svg>
<div class="sep" style="left:544.4px;top:42px;height:33px"></div>
<svg class="ic" style="left:553px;top:46px" viewBox="0 0 24 24"><rect x="2.00" y="4.60" width="20.00" height="1.3" fill="#747474"/><rect x="2.00" y="5.90" width="20.00" height="1.5" fill="#5c5c5c"/><rect x="2.00" y="7.40" width="20.00" height="0.7" fill="#262a2a"/><rect x="2.00" y="8.90" width="13.60" height="1.3" fill="#747474"/><rect x="2.00" y="10.20" width="13.60" height="1.5" fill="#5c5c5c"/><rect x="2.00" y="11.70" width="13.60" height="0.7" fill="#262a2a"/><rect x="2.00" y="13.20" width="9.86" height="1.3" fill="#747474"/><rect x="2.00" y="14.50" width="9.86" height="1.5" fill="#5c5c5c"/><rect x="2.00" y="16.00" width="9.86" height="0.7" fill="#262a2a"/><rect x="2.00" y="17.40" width="9.86" height="1.3" fill="#747474"/><rect x="2.00" y="18.70" width="9.86" height="1.5" fill="#5c5c5c"/><rect x="2.00" y="20.20" width="9.86" height="0.7" fill="#262a2a"/><path d="M20.800 10.400c2 1.800 1.800 4.700-2.300 5.400v-1.800l-4.900 2.900 4.900 2.900v-1.800c5.600-.700 6.400-5.400 2.300-7.600z" fill="#6cc832" stroke="#3a9412" stroke-width="0.600" stroke-linejoin="round"/></svg>
<svg class="ic" style="left:586px;top:46px" viewBox="0 0 24 24"><rect x="1.500" y="1" width="20" height="21.500" fill="#fdfdfd" stroke="#2b2b2b" stroke-width="0.500"/><rect x="1.500" y="1" width="20" height="5" fill="#74c738" stroke="#4f9a1c" stroke-width="0.600"/><path d="M6.500 1v21.500M11.500 1v21.500M16.500 1v21.500M1.500 10.200h20M1.500 18.300h20" stroke="#c9c9c9" stroke-width="0.800"/><path d="M6.500 1v5M11.500 1v5M16.500 1v5" stroke="#9be05a" stroke-width="0.800"/><rect x="6.500" y="10.200" width="10" height="8.100" fill="#3da5ea" stroke="#1d7fd0" stroke-width="0.900"/><path d="M11 11.500v5.500l-3.500-2.750zM12.200 11.500v5.500l3.500-2.750z" fill="#f57900"/></svg>
<div class="sep" style="left:618.7px;top:42px;height:33px"></div>
<svg class="ic" style="left:627px;top:46px" viewBox="0 0 24 24"><rect x="1.80" y="4.60" width="20.00" height="1.3" fill="#747474"/><rect x="1.80" y="5.90" width="20.00" height="1.5" fill="#5c5c5c"/><rect x="1.80" y="7.40" width="20.00" height="0.7" fill="#262a2a"/><rect x="1.80" y="8.60" width="13.60" height="1.3" fill="#747474"/><rect x="1.80" y="9.90" width="13.60" height="1.5" fill="#5c5c5c"/><rect x="1.80" y="11.40" width="13.60" height="0.7" fill="#262a2a"/></svg>
<div class="act" style="left:655px;top:41px;width:33px;height:34px"></div>
<svg class="ic" style="left:660px;top:46px" viewBox="0 0 24 24"><rect x="2.00" y="9.00" width="20.00" height="1.3" fill="#747474"/><rect x="2.00" y="10.30" width="20.00" height="1.5" fill="#5c5c5c"/><rect x="2.00" y="11.80" width="20.00" height="0.7" fill="#262a2a"/><rect x="2.00" y="13.00" width="13.60" height="1.3" fill="#747474"/><rect x="2.00" y="14.30" width="13.60" height="1.5" fill="#5c5c5c"/><rect x="2.00" y="15.80" width="13.60" height="0.7" fill="#262a2a"/></svg>
<svg class="ic" style="left:693px;top:46px" viewBox="0 0 24 24"><rect x="2.00" y="13.00" width="20.00" height="1.3" fill="#747474"/><rect x="2.00" y="14.30" width="20.00" height="1.5" fill="#5c5c5c"/><rect x="2.00" y="15.80" width="20.00" height="0.7" fill="#262a2a"/><rect x="2.00" y="17.00" width="13.60" height="1.3" fill="#747474"/><rect x="2.00" y="18.30" width="13.60" height="1.5" fill="#5c5c5c"/><rect x="2.00" y="19.80" width="13.60" height="0.7" fill="#262a2a"/></svg>
<div class="sep" style="left:726px;top:42px;height:33px"></div>
<svg class="ic" style="left:732px;top:46px" viewBox="0 0 24 24"><rect x="5" y="5.500" width="18" height="11" fill="#5fba2c" stroke="#3f9412" stroke-width="0.500"/><rect x="0.500" y="4" width="19" height="11.500" fill="#74cc3a" stroke="#3f9412" stroke-width="0.600"/><circle cx="10" cy="9" r="2.800" fill="#2f9a1c"/><path d="M5.500 15.500c0-3.500 9-3.500 9 0z" fill="#2f9a1c"/><circle cx="3" cy="6.300" r="0.900" fill="#bff08a"/><circle cx="17" cy="6.300" r="0.900" fill="#bff08a"/><ellipse cx="18.500" cy="19" rx="4" ry="2.700" transform="rotate(35 18.500 19)" fill="url(#gGold)" stroke="#b88a14" stroke-width="0.600"/><rect x="5.300" y="14.500" width="8.700" height="7" fill="url(#gGold)"/><ellipse cx="9.650" cy="21.500" rx="4.350" ry="1.600" fill="url(#gGold)" stroke="#b88a14" stroke-width="0.500"/><ellipse cx="9.650" cy="14.500" rx="4.350" ry="1.600" fill="#fff1a0" stroke="#b88a14" stroke-width="0.500"/></svg>
<div class="arr" style="left:762.6px;top:58px"></div>
<svg class="ic" style="left:778px;top:46px" viewBox="0 0 24 24"><path d="M18.78 15.17Q18.78 17.41 17.99 18.58Q17.19 19.76 15.66 19.76Q14.11 19.76 13.32 18.6Q12.54 17.43 12.54 15.17Q12.54 12.87 13.3 11.72Q14.06 10.57 15.7 10.57Q17.28 10.57 18.03 11.73Q18.78 12.89 18.78 15.17ZM8.07 19.6H6.25L14.36 5.15H16.21ZM6.8 4.99Q8.38 4.99 9.14 6.15Q9.9 7.31 9.9 9.58Q9.9 11.82 9.1 13Q8.31 14.19 6.75 14.19Q5.22 14.19 4.43 13.01Q3.65 11.84 3.65 9.58Q3.65 7.25 4.41 6.12Q5.17 4.99 6.8 4.99ZM16.89 15.17Q16.89 13.54 16.62 12.84Q16.35 12.15 15.7 12.15Q14.99 12.15 14.72 12.85Q14.45 13.56 14.45 15.17Q14.45 16.81 14.73 17.48Q15.02 18.15 15.68 18.15Q16.32 18.15 16.6 17.46Q16.89 16.76 16.89 15.17ZM7.99 9.58Q7.99 7.97 7.72 7.27Q7.45 6.58 6.8 6.58Q6.09 6.58 5.82 7.27Q5.55 7.96 5.55 9.58Q5.55 11.2 5.83 11.89Q6.12 12.59 6.78 12.59Q7.43 12.59 7.71 11.89Q7.99 11.19 7.99 9.58Z" fill="url(#gGray)" stroke="#202323" stroke-width="0.9" paint-order="stroke" stroke-linejoin="round"/></svg>
<svg class="ic" style="left:811px;top:46px" viewBox="0 0 24 24"><path d="M10.44 8.55Q9.62 9.99 8.89 11.33Q8.16 12.68 7.62 14.05Q7.08 15.41 6.76 16.85Q6.45 18.29 6.45 19.9H3.92Q3.92 18.22 4.32 16.64Q4.72 15.07 5.47 13.44Q6.21 11.8 8.19 8.63H2.16V6.42H10.44ZM10.91 19.9V16.98H13.4V19.9ZM21.21 17.15V19.9H18.9V17.15H13.38V15.13L18.5 6.42H21.21V15.15H22.83V17.15ZM18.9 10.74Q18.9 10.22 18.93 9.62Q18.96 9.02 18.98 8.85Q18.75 9.38 18.17 10.4L15.35 15.15H18.9Z" fill="url(#gGray)" stroke="#202323" stroke-width="0.9" paint-order="stroke" stroke-linejoin="round"/></svg>
<svg class="ic" style="left:844px;top:46px" viewBox="0 0 24 24"><path d="M2.300 5.200h3.700v1.800h3.500V5.200h5v1.800h3.500V5.200h3.700v15.800H2.300z" fill="#3b4040" stroke="#1f2222" stroke-width="1.100"/><path d="M2.300 5.200h3.700v1.800h3.500V5.200h5v1.800h3.500V5.200h3.700v4H2.300z" fill="#4a4f4f" stroke="#1f2222" stroke-width="0.800"/><path d="M2.800 9.200h18.400" stroke="#1f2222" stroke-width="1"/><g fill="#333838" stroke="#1f2222" stroke-width="0.600"><rect x="6" y="11.300" width="2.200" height="2.200"/><rect x="10.300" y="11.300" width="2.200" height="2.200"/><rect x="14.600" y="11.300" width="2.200" height="2.200"/><rect x="14.600" y="15.600" width="2.200" height="2.200"/></g></svg>
<div class="sep" style="left:876.5px;top:42px;height:33px"></div>
<svg class="ic" style="left:885px;top:46px" viewBox="0 0 24 24"><path d="M8.69 10.7Q8.69 14.36 7.63 16.28Q6.58 18.21 4.51 18.21Q2.45 18.21 1.41 16.29Q0.38 14.38 0.38 10.7Q0.38 6.94 1.38 5.07Q2.39 3.2 4.56 3.2Q6.68 3.2 7.68 5.09Q8.69 6.99 8.69 10.7ZM7.14 10.7Q7.14 7.54 6.54 6.13Q5.94 4.71 4.56 4.71Q3.15 4.71 2.54 6.11Q1.92 7.5 1.92 10.7Q1.92 13.81 2.55 15.25Q3.17 16.69 4.53 16.69Q5.88 16.69 6.51 15.22Q7.14 13.75 7.14 10.7ZM9.76 18V15.73H11.41V18ZM20.79 10.7Q20.79 14.36 19.73 16.28Q18.67 18.21 16.61 18.21Q14.55 18.21 13.51 16.29Q12.48 14.38 12.48 10.7Q12.48 6.94 13.48 5.07Q14.49 3.2 16.66 3.2Q18.78 3.2 19.78 5.09Q20.79 6.99 20.79 10.7ZM19.23 10.7Q19.23 7.54 18.64 6.13Q18.04 4.71 16.66 4.71Q15.25 4.71 14.64 6.11Q14.02 7.5 14.02 10.7Q14.02 13.81 14.65 15.25Q15.27 16.69 16.63 16.69Q17.98 16.69 18.61 15.22Q19.23 13.75 19.23 10.7Z" fill="#484d4d" stroke="#1f2323" stroke-width="1.1" paint-order="stroke" stroke-linejoin="round"/><path d="M16.7 13.7h3.4v3.3h3.3v3.4h-3.3v3.3h-3.4v-3.3h-3.3v-3.4h3.3z" fill="#69c52b" stroke="#3d8f12" stroke-width="0.8"/></svg>
<svg class="ic" style="left:918px;top:46px" viewBox="0 0 24 24"><path d="M8.69 10.7Q8.69 14.36 7.63 16.28Q6.58 18.21 4.51 18.21Q2.45 18.21 1.41 16.29Q0.38 14.38 0.38 10.7Q0.38 6.94 1.38 5.07Q2.39 3.2 4.56 3.2Q6.68 3.2 7.68 5.09Q8.69 6.99 8.69 10.7ZM7.14 10.7Q7.14 7.54 6.54 6.13Q5.94 4.71 4.56 4.71Q3.15 4.71 2.54 6.11Q1.92 7.5 1.92 10.7Q1.92 13.81 2.55 15.25Q3.17 16.69 4.53 16.69Q5.88 16.69 6.51 15.22Q7.14 13.75 7.14 10.7ZM9.76 18V15.73H11.41V18ZM20.79 10.7Q20.79 14.36 19.73 16.28Q18.67 18.21 16.61 18.21Q14.55 18.21 13.51 16.29Q12.48 14.38 12.48 10.7Q12.48 6.94 13.48 5.07Q14.49 3.2 16.66 3.2Q18.78 3.2 19.78 5.09Q20.79 6.99 20.79 10.7ZM19.23 10.7Q19.23 7.54 18.64 6.13Q18.04 4.71 16.66 4.71Q15.25 4.71 14.64 6.11Q14.02 7.5 14.02 10.7Q14.02 13.81 14.65 15.25Q15.27 16.69 16.63 16.69Q17.98 16.69 18.61 15.22Q19.23 13.75 19.23 10.7Z" fill="#484d4d" stroke="#1f2323" stroke-width="1.1" paint-order="stroke" stroke-linejoin="round"/><path d="M13.300 16l1.800-1.800 3.300 3.300 3.300-3.300 1.800 1.800-3.300 3.300 3.300 3.300-1.800 1.800-3.300-3.300-3.300 3.300-1.800-1.800 3.300-3.300z" fill="#d8283a" stroke="#9a101c" stroke-width="0.700"/></svg>
<div class="sep" style="left:951px;top:42px;height:33px"></div>
<svg class="ic" style="left:959px;top:46px" viewBox="0 0 24 24"><g fill="#505454"><rect x="13.500" y="3.500" width="9.500" height="1"/><rect x="13.500" y="7.200" width="9.500" height="2"/><rect x="13.500" y="11.500" width="7" height="2"/><rect x="13.500" y="15.700" width="9.500" height="1"/><rect x="3.500" y="18.500" width="8" height="1" opacity="0.700"/><rect x="13.500" y="18.500" width="4" height="1" opacity="0.700"/><rect x="3.500" y="3.500" width="8" height="1" opacity="0.600"/></g><path d="M13.500 3v18" stroke="#41464a" stroke-width="0.700" stroke-dasharray="1 1"/><path d="M1.500 9.500h5.500v-3l5 4.800-5 4.800v-3H1.500z" fill="#3daee9" stroke="#1d7fd0" stroke-width="0.600" stroke-linejoin="round"/></svg>
<svg class="ic" style="left:992px;top:46px" viewBox="0 0 24 24"><g fill="#505454"><rect x="13.500" y="3.500" width="9.500" height="1"/><rect x="13.500" y="7.200" width="9.500" height="2"/><rect x="13.500" y="11.500" width="7" height="2"/><rect x="13.500" y="15.700" width="9.500" height="1"/><rect x="3.500" y="18.500" width="8" height="1" opacity="0.700"/><rect x="13.500" y="18.500" width="4" height="1" opacity="0.700"/><rect x="3.500" y="3.500" width="8" height="1" opacity="0.600"/></g><path d="M13.500 3v18" stroke="#41464a" stroke-width="0.700" stroke-dasharray="1 1"/><path d="M12 9.500H6.500v-3l-5 4.800 5 4.800v-3H12z" fill="#b36ae2" stroke="#8a3fc0" stroke-width="0.600" stroke-linejoin="round"/></svg>
<div class="sep" style="left:1024.7px;top:42px;height:33px"></div>
<svg class="ic" style="left:1031px;top:46px" viewBox="0 0 24 24"><path d="M11.500 3v17M2 11.500h19" stroke="#8f9393" stroke-width="1.200"/><rect x="2.300" y="3.300" width="18.400" height="16.400" fill="none" stroke="#f57900" stroke-width="2.600"/></svg>
<div class="arr" style="left:1062px;top:58px"></div>
<svg class="ic" style="left:1075px;top:46px" viewBox="0 0 24 24"><path d="M3.500 17.500l1-3.800L15.800 2.500l3 3L7.500 16.500z" fill="#2b2b2b" stroke="#111" stroke-width="0.500"/><path d="M15.800 2.500l1.300-1.300c.5-.5 1.300-.5 1.800 0l1.200 1.200c.5.500.5 1.300 0 1.800l-1.300 1.300z" fill="#e86ad0" stroke="#b83fa0" stroke-width="0.500"/><path d="M3.500 17.500l1-3.800 3 2.800z" fill="#f6e08a" stroke="#b89a2a" stroke-width="0.500"/><path d="M7 12l8.500-8.500" stroke="#6a6a6a" stroke-width="0.800"/><path d="M2 19.500c4-2 8 1.500 15-1" fill="none" stroke="#0d0d0d" stroke-width="1.600"/><path d="M2.500 22.700c4-1.500 8 1 14-.8" fill="none" stroke="#111" stroke-width="1.200" stroke-dasharray="1.600 1"/></svg>
<div class="arr" style="left:1105.7px;top:58px"></div>
<svg class="ic" style="left:1119px;top:46px" viewBox="0 0 24 24"><rect x="0" y="18" width="24" height="6" fill="#2a62a8"/><path d="M4 18V3.500h17" fill="none" stroke="#3daee9" stroke-width="2.800"/><path d="M4.800 18V4.300h16.200" fill="none" stroke="#d6f0ff" stroke-width="0.800"/><path d="M8.500 11l6.500-4c2-.8 4.300 1.500 5 4 .5 2-.2 3.600-1.200 4l-6 2.300c-.7.200-1.300-.1-1.600-.7z" fill="url(#gMetal)" stroke="#6a6a6a" stroke-width="0.500"/><ellipse cx="10" cy="13.800" rx="1.600" ry="3.300" transform="rotate(-24 10 13.800)" fill="#4a4a4a" stroke="#9a9a9a" stroke-width="0.500"/><path d="M13.500 12V8.200c0-1.600-2.300-1.800-2.900-.5" fill="none" stroke="#d8d8d8" stroke-width="0.800"/><circle cx="13.500" cy="12.300" r="1.100" fill="#f4f4f4" stroke="#3a3a3a" stroke-width="0.600"/><path d="M11.500 18l-.8-2 .8-1.200.8 1.200z" fill="#f08a10"/></svg>
<div class="arr" style="left:1149.4px;top:58px"></div>
<div class="sep" style="left:1164.6px;top:42px;height:33px"></div>
<svg class="ic" style="left:1171px;top:46px" viewBox="0 0 24 24"><rect x="1.500" y="1.500" width="21" height="21" fill="#c6c6c6" stroke="#9a9a9a" stroke-width="0.600"/><rect x="4.500" y="4.500" width="15" height="3.200" rx="1.200" fill="#ea4a4f" stroke="#c01c28" stroke-width="0.500"/><rect x="4.500" y="10.500" width="6.500" height="3.200" rx="1.200" fill="#4fb0f0" stroke="#1d7fd0" stroke-width="0.500"/><rect x="4.500" y="16.500" width="11.500" height="3.200" rx="1.200" fill="#8fdc4a" stroke="#4f9a1c" stroke-width="0.500"/></svg>
<div class="arr" style="left:1201.3px;top:58px"></div>
<div class="sep" style="left:1216.5px;top:42px;height:33px"></div>
<div class="act" style="left:1220px;top:41px;width:33px;height:34px"></div>
<svg class="ic" style="left:1224px;top:46px" viewBox="0 0 24 24"><defs><linearGradient id="gPil" x1="0" y1="0" x2="0" y2="1"><stop offset="0" stop-color="#9a9a9a"/><stop offset="1" stop-color="#4a4a4a"/></linearGradient></defs><path d="M13.500 2.500h6.500v18.500h-2V4.500h-2.200v16.500h-2v-9.500c-3.500 0-5.300-2-5.300-4.500s1.800-4.500 5-4.500z" fill="url(#gPil)"/><path d="M1 14.800h5.500v-3l5 4.600-5 4.600v-3H1z" fill="#3daee9" stroke="#1d8fe0" stroke-width="0.600" stroke-linejoin="round"/></svg>
<svg class="ic" style="left:1259px;top:46px" viewBox="0 0 24 24"><path d="M8 2.500h6.500v18.500h-2V4.500h-2.200v16.500h-2v-9.500c-3.500 0-5.300-2-5.300-4.500s1.800-4.500 5-4.500z" fill="#4a4a4a"/><path d="M23.500 14h-5.500v-3l-5 4.600 5 4.600v-3h5.500z" fill="#b36ae2" stroke="#8a3fc0" stroke-width="0.600" stroke-linejoin="round"/><path d="M13 14.500l-1.500 1.200 1.500 1.200z" fill="#f4f4f4"/></svg>
<div class="a" style="left:12px;top:43px;width:150px;height:30px;background:linear-gradient(#383d3d,#363b3b 50%,#313636 50%,#303535);border:1px solid #3c4141;border-radius:4px"></div>
<div class="a" style="left:12px;top:43px;width:131px;height:30px;background:#292929;border:1px solid #232525;border-right:none;border-radius:4px 0 0 4px"></div>
<div class="t" id="fname" style="left:16.5px;top:51.5px;letter-spacing:0.27px">Liberation Sans</div>
<div class="arrw" style="left:146.5px;top:56px"></div>
<div class="a" style="left:170px;top:43px;width:60px;height:30px;background:linear-gradient(#383d3d,#363b3b 50%,#313636 50%,#303535);border:1px solid #3c4141;border-radius:4px"></div>
<div class="a" style="left:170px;top:43px;width:41px;height:30px;background:#292929;border:1px solid #232525;border-right:none;border-radius:4px 0 0 4px"></div>
<div class="t" style="left:174.5px;top:51.5px;letter-spacing:0.85px">10</div>
<div class="arrw" style="left:214.5px;top:56px"></div>
</div>
<div class="a" id="fbar">
<div class="a" style="left:0;top:-4px;width:1600px;height:4px;background:linear-gradient(#303535,#2a2e2e 60%,#2c3030)"></div>
<div class="a" style="left:1px;top:1px;width:168px;height:30px;background:linear-gradient(#383d3d,#363b3b 50%,#313636 50%,#303535);border-radius:4px;border:1px solid #3c4141"></div>
<div class="a" style="left:1px;top:1px;width:149px;height:30px;background:#282828;border-radius:4px 0 0 4px"></div>
<div class="t" style="left:4px;top:10px;letter-spacing:0.9px">I2:I10</div>
<div class="arrw" style="left:154px;top:14px"></div>
<div class="sep" style="left:173px;top:3px;height:26px;background:#43484a"></div><div class="sep" style="left:267px;top:3px;height:26px;background:#43484a"></div>
<svg class="a" style="left:180px;top:6px" width="90" height="20" viewBox="0 0 90 20"><path d="M7.08 8.66V16.5H4.25V8.66H2.65V6.99H4.25V6Q4.25 4.71 5.04 4.08Q5.83 3.46 7.43 3.46Q8.23 3.46 9.23 3.6V5.19Q8.82 5.11 8.4 5.11Q7.68 5.11 7.38 5.36Q7.08 5.61 7.08 6.24V6.99H9.23V8.66Z" fill="url(#gGray)" stroke="#202323" stroke-width="0.8" paint-order="stroke" stroke-linejoin="round"/><path d="M15.12 17 13.36 14.51 11.59 17H9.5L12.26 13.45L9.63 10.13H11.75L13.36 12.38L14.96 10.13H17.09L14.46 13.43L17.25 17Z" fill="url(#gGray)" stroke="#202323" stroke-width="0.8" paint-order="stroke" stroke-linejoin="round"/><path d="M28.1 16.5V14.47L31.61 10.06L28.24 6.28V4.25H36.05V6.24H30.6L33.5 9.48V10.64L30.42 14.52H36.53V16.5Z" fill="url(#gGray)" stroke="#202323" stroke-width="0.8" paint-order="stroke" stroke-linejoin="round"/><path d="M48 10h7l-3.500 3.700z" fill="#0a0a0a"/><rect x="66" y="6.500" width="10" height="2.500" fill="#7a7a7a" stroke="#2a2d2d" stroke-width="0.600"/><rect x="66" y="11" width="10" height="2.500" fill="#7a7a7a" stroke="#2a2d2d" stroke-width="0.600"/></svg>
<div class="a" style="left:271px;top:3px;width:1255px;height:27px;background:#2a2a2a;border:1px solid #7d8383"></div>
<div class="t" style="left:277px;top:10px;letter-spacing:0.12px">=COUNT(B2:G2)</div>
<div class="arrw" style="left:1530px;top:13px;border-left-width:5.8px;border-right-width:5.8px;border-top-width:6.3px"></div>
</div>
<div class="a" style="left:0;top:163px;width:1553px;height:1px;background:#8d9292"></div>
<div class="a" style="left:41px;top:187px;width:1497px;height:647px;background:#fff"></div>
<div class="a" style="left:41px;top:187px;width:1497px;height:647px;background:repeating-linear-gradient(transparent 0 23px,#c0c0c0 23px 24px)"></div>
<div class="a" style="left:304px;top:187px;width:1px;height:647px;background:#c0c0c0"></div>
<div class="a" style="left:420px;top:187px;width:1px;height:647px;background:#c0c0c0"></div>
<div class="a" style="left:536px;top:187px;width:1px;height:647px;background:#c0c0c0"></div>
<div class="a" style="left:652px;top:187px;width:1px;height:647px;background:#c0c0c0"></div>
<div class="a" style="left:768px;top:187px;width:1px;height:647px;background:#c0c0c0"></div>
<div class="a" style="left:884px;top:187px;width:1px;height:647px;background:#c0c0c0"></div>
<div class="a" style="left:1000px;top:187px;width:1px;height:647px;background:#c0c0c0"></div>
<div class="a" style="left:1116px;top:187px;width:1px;height:647px;background:#c0c0c0"></div>
<div class="a" style="left:1334px;top:187px;width:1px;height:647px;background:#c0c0c0"></div>
<div class="a" style="left:1450px;top:187px;width:1px;height:647px;background:#c0c0c0"></div>
<div class="a" style="left:0;top:164px;width:1538px;height:23px;background:#393e3e"></div>
<div class="a" style="left:0;top:186px;width:1538px;height:1px;background:#8d9292"></div>
<div class="hc" style="left:41px;width:263px">A</div>
<div class="hc" style="left:305px;width:115px">B</div>
<div class="hc" style="left:421px;width:115px">C</div>
<div class="hc" style="left:537px;width:115px">D</div>
<div class="hc" style="left:653px;width:115px">E</div>
<div class="hc" style="left:769px;width:115px">F</div>
<div class="hc" style="left:885px;width:115px">G</div>
<div class="hc" style="left:1001px;width:115px">H</div>
<div class="hc" style="left:1116px;width:219px;height:23px;background:#1659a6;font-weight:bold;color:#fff">I</div>
<div class="hc" style="left:1335px;width:115px">J</div>
<div class="hc" style="left:1451px;width:115px">K</div>
<div class="a" style="left:40px;top:164px;width:1px;height:23px;background:#9ea3a3"></div>
<div class="a" style="left:304px;top:164px;width:1px;height:23px;background:#9ea3a3"></div>
<div class="a" style="left:420px;top:164px;width:1px;height:23px;background:#9ea3a3"></div>
<div class="a" style="left:536px;top:164px;width:1px;height:23px;background:#9ea3a3"></div>
<div class="a" style="left:652px;top:164px;width:1px;height:23px;background:#9ea3a3"></div>
<div class="a" style="left:768px;top:164px;width:1px;height:23px;background:#9ea3a3"></div>
<div class="a" style="left:884px;top:164px;width:1px;height:23px;background:#9ea3a3"></div>
<div class="a" style="left:1000px;top:164px;width:1px;height:23px;background:#9ea3a3"></div>
<div class="a" style="left:1450px;top:164px;width:1px;height:23px;background:#9ea3a3"></div>
<div class="a" style="left:0;top:187px;width:41px;height:648px;background:#393e3e"></div>
<div class="a" style="left:0;top:210px;width:41px;height:217px;background:#1659a6"></div>
<div class="rh" style="top:187px">1</div>
<div class="rh" style="top:211px;font-weight:bold;color:#fff">2</div>
<div class="a" style="left:0;top:234px;width:40px;height:1px;background:#134f96"></div>
<div class="rh" style="top:235px;font-weight:bold;color:#fff">3</div>
<div class="a" style="left:0;top:258px;width:40px;height:1px;background:#134f96"></div>
<div class="rh" style="top:259px;font-weight:bold;color:#fff">4</div>
<div class="a" style="left:0;top:282px;width:40px;height:1px;background:#134f96"></div>
<div class="rh" style="top:283px;font-weight:bold;color:#fff">5</div>
<div class="a" style="left:0;top:306px;width:40px;height:1px;background:#134f96"></div>
<div class="rh" style="top:307px;font-weight:bold;color:#fff">6</div>
<div class="a" style="left:0;top:330px;width:40px;height:1px;background:#134f96"></div>
<div class="rh" style="top:331px;font-weight:bold;color:#fff">7</div>
<div class="a" style="left:0;top:354px;width:40px;height:1px;background:#134f96"></div>
<div class="rh" style="top:355px;font-weight:bold;color:#fff">8</div>
<div class="a" style="left:0;top:378px;width:40px;height:1px;background:#134f96"></div>
<div class="rh" style="top:379px;font-weight:bold;color:#fff">9</div>
<div class="a" style="left:0;top:402px;width:40px;height:1px;background:#134f96"></div>
<div class="rh" style="top:403px;font-weight:bold;color:#fff">10</div>
<div class="rh" style="top:427px">11</div>
<div class="a" style="left:0;top:450px;width:40px;height:1px;background:#8d9292"></div>
<div class="rh" style="top:451px">12</div>
<div class="a" style="left:0;top:474px;width:40px;height:1px;background:#8d9292"></div>
<div class="rh" style="top:475px">13</div>
<div class="a" style="left:0;top:498px;width:40px;height:1px;background:#8d9292"></div>
<div class="rh" style="top:499px">14</div>
<div class="a" style="left:0;top:522px;width:40px;height:1px;background:#8d9292"></div>
<div class="rh" style="top:523px">15</div>
<div class="a" style="left:0;top:546px;width:40px;height:1px;background:#8d9292"></div>
<div class="rh" style="top:547px">16</div>
<div class="a" style="left:0;top:570px;width:40px;height:1px;background:#8d9292"></div>
<div class="rh" style="top:571px">17</div>
<div class="a" style="left:0;top:594px;width:40px;height:1px;background:#8d9292"></div>
<div class="rh" style="top:595px">18</div>
<div class="a" style="left:0;top:618px;width:40px;height:1px;background:#8d9292"></div>
<div class="rh" style="top:619px">19</div>
<div class="a" style="left:0;top:642px;width:40px;height:1px;background:#8d9292"></div>
<div class="rh" style="top:643px">20</div>
<div class="a" style="left:0;top:666px;width:40px;height:1px;background:#8d9292"></div>
<div class="rh" style="top:667px">21</div>
<div class="a" style="left:0;top:690px;width:40px;height:1px;background:#8d9292"></div>
<div class="rh" style="top:691px">22</div>
<div class="a" style="left:0;top:714px;width:40px;height:1px;background:#8d9292"></div>
<div class="rh" style="top:715px">23</div>
<div class="a" style="left:0;top:738px;width:40px;height:1px;background:#8d9292"></div>
<div class="rh" style="top:739px">24</div>
<div class="a" style="left:0;top:762px;width:40px;height:1px;background:#8d9292"></div>
<div class="rh" style="top:763px">25</div>
<div class="a" style="left:0;top:786px;width:40px;height:1px;background:#8d9292"></div>
<div class="rh" style="top:787px">26</div>
<div class="a" style="left:0;top:810px;width:40px;height:1px;background:#8d9292"></div>
<div class="rh" style="top:811px">27</div>
<div class="a" style="left:0;top:834px;width:40px;height:1px;background:#8d9292"></div>
<div class="a" style="left:40px;top:426px;width:1px;height:409px;background:#8d9292"></div>
<div class="a" style="left:40px;top:187px;width:1px;height:23px;background:#9ea3a3"></div>
<div class="a" style="left:0;top:834px;width:1538px;height:1px;background:#a4a8a8"></div>
<div class="a" style="left:41px;top:187px;width:1293px;height:23px;background:#8f87b0"></div>
<div class="a" style="left:41px;top:210px;width:1075px;height:216px;background:#b7b3cf"></div>
<div class="a" style="left:1116px;top:210px;width:218px;height:216px;background:#91a1c6"></div>
<svg class="a" style="left:0;top:0" width="1600" height="440" viewBox="0 0 1600 440"><g stroke="#050508" stroke-width="1.4" fill="none"><path d="M40.4 210.5H1335" stroke-dasharray="1.2 1.6" stroke-width="1.7"/><path d="M40.4 234.5H1335" stroke-dasharray="1.2 1.6" stroke-width="1.7"/><path d="M40.4 258.5H1335" stroke-dasharray="1.2 1.6" stroke-width="1.7"/><path d="M40.4 282.5H1335" stroke-dasharray="1.2 1.6" stroke-width="1.7"/><path d="M40.4 306.5H1335" stroke-dasharray="1.2 1.6" stroke-width="1.7"/><path d="M40.4 330.5H1335" stroke-dasharray="1.2 1.6" stroke-width="1.7"/><path d="M40.4 354.5H1335" stroke-dasharray="1.2 1.6" stroke-width="1.7"/><path d="M40.4 378.5H1335" stroke-dasharray="1.2 1.6" stroke-width="1.7"/><path d="M40.4 402.5H1335" stroke-dasharray="1.2 1.6" stroke-width="1.7"/><path d="M40.4 426.5H1335" stroke-dasharray="1.2 1.6" stroke-width="1.7"/><path d="M41 211V427" stroke-dasharray="1.2 1.6" stroke-width="0.8"/><path d="M304.6 211V427" stroke-dasharray="1.2 1.6"/><path d="M420.6 211V427" stroke-dasharray="1.2 1.6"/><path d="M536.6 211V427" stroke-dasharray="1.2 1.6"/><path d="M652.6 211V427" stroke-dasharray="1.2 1.6"/><path d="M768.6 211V427" stroke-dasharray="1.2 1.6"/><path d="M884.6 211V427" stroke-dasharray="1.2 1.6"/><path d="M1000.6 211V427" stroke-dasharray="1.2 1.6"/><path d="M1116.6 235V427" stroke-dasharray="1.2 1.6"/><path d="M1334.6 235V427" stroke-dasharray="1.2 1.6"/><path d="M304.6 186.6V210.5"/><path d="M420.6 186.6V210.5"/><path d="M536.6 186.6V210.5"/><path d="M652.6 186.6V210.5"/><path d="M768.6 186.6V210.5"/><path d="M884.6 186.6V210.5"/><path d="M1000.6 186.6V210.5"/><path d="M1116.6 186.6V210.5"/><path d="M1334.6 186.6V210.5"/></g></svg>
<div class="c ar" style="left:41px;top:187px;width:263px">الاسم</div>
<div class="c ar" style="left:305px;top:187px;width:115px">تاريخ</div>
<div class="c ar" style="left:421px;top:187px;width:115px">اسلامية</div>
<div class="c ar" style="left:537px;top:187px;width:115px">علوم</div>
<div class="c ar" style="left:653px;top:187px;width:115px">لغة عربية</div>
<div class="c ar" style="left:769px;top:187px;width:115px">جغرافية</div>
<div class="c ar" style="left:885px;top:187px;width:115px">المجموع</div>
<div class="c ar" style="left:1001px;top:187px;width:115px">التقييم</div>
<div class="c ar" style="left:1117px;top:187px;width:217px">عدد المواد المتقدم لها</div>
<div class="c ar" style="left:41px;top:211px;width:263px">خالد محمد العبدالله</div>
<div class="c" style="left:305px;top:211px;width:115px">15</div>
<div class="c" style="left:421px;top:211px;width:115px">18</div>
<div class="c" style="left:537px;top:211px;width:115px">22</div>
<div class="c" style="left:653px;top:211px;width:115px">14</div>
<div class="c" style="left:769px;top:211px;width:115px">16</div>
<div class="c" style="left:885px;top:211px;width:115px">85</div>
<div class="c ar" style="left:1001px;top:211px;width:115px">ناجح</div>
<div class="c" style="left:1117px;top:211px;width:217px">6</div>
<div class="c ar" style="left:41px;top:235px;width:263px">وليد يوسف الحسين</div>
<div class="c" style="left:305px;top:235px;width:115px">25</div>
<div class="c" style="left:421px;top:235px;width:115px">16</div>
<div class="c" style="left:537px;top:235px;width:115px">24</div>
<div class="c" style="left:653px;top:235px;width:115px">15</div>
<div class="c" style="left:769px;top:235px;width:115px">25</div>
<div class="c" style="left:885px;top:235px;width:115px">105</div>
<div class="c ar" style="left:1001px;top:235px;width:115px">ناجح</div>
<div class="c" style="left:1117px;top:235px;width:217px">6</div>
<div class="c ar" style="left:41px;top:259px;width:263px">ماجد يزن الحسين</div>
<div class="c" style="left:305px;top:259px;width:115px">12</div>
<div class="c" style="left:421px;top:259px;width:115px">14</div>
<div class="c" style="left:537px;top:259px;width:115px">23</div>
<div class="c ar" style="left:653px;top:259px;width:115px">لم يتقدم للاختبار</div>
<div class="c" style="left:769px;top:259px;width:115px">16</div>
<div class="c" style="left:885px;top:259px;width:115px">65</div>
<div class="c ar" style="left:1001px;top:259px;width:115px">راسب</div>
<div class="c" style="left:1117px;top:259px;width:217px">5</div>
<div class="c ar" style="left:41px;top:283px;width:263px">عبدالله محمد يونس</div>
<div class="c" style="left:305px;top:283px;width:115px">12</div>
<div class="c" style="left:421px;top:283px;width:115px">18</div>
<div class="c" style="left:537px;top:283px;width:115px">22</div>
<div class="c" style="left:653px;top:283px;width:115px">22</div>
<div class="c" style="left:769px;top:283px;width:115px">24</div>
<div class="c" style="left:885px;top:283px;width:115px">98</div>
<div class="c ar" style="left:1001px;top:283px;width:115px">ناجح</div>
<div class="c" style="left:1117px;top:283px;width:217px">6</div>
<div class="c ar" style="left:41px;top:307px;width:263px">عيسى محمد الجابر</div>
<div class="c" style="left:305px;top:307px;width:115px">16</div>
<div class="c ar" style="left:421px;top:307px;width:115px">لم يتقدم للاختبار</div>
<div class="c" style="left:537px;top:307px;width:115px">19</div>
<div class="c" style="left:653px;top:307px;width:115px">14</div>
<div class="c" style="left:769px;top:307px;width:115px">15</div>
<div class="c" style="left:885px;top:307px;width:115px">64</div>
<div class="c ar" style="left:1001px;top:307px;width:115px">راسب</div>
<div class="c" style="left:1117px;top:307px;width:217px">5</div>
<div class="c ar" style="left:41px;top:331px;width:263px">خالد علي العلي</div>
<div class="c" style="left:305px;top:331px;width:115px">14</div>
<div class="c" style="left:421px;top:331px;width:115px">16</div>
<div class="c" style="left:537px;top:331px;width:115px">18</div>
<div class="c" style="left:653px;top:331px;width:115px">22</div>
<div class="c ar" style="left:769px;top:331px;width:115px">لم يتقدم للاختبار</div>
<div class="c" style="left:885px;top:331px;width:115px">70</div>
<div class="c ar" style="left:1001px;top:331px;width:115px">راسب</div>
<div class="c" style="left:1117px;top:331px;width:217px">5</div>
<div class="c ar" style="left:41px;top:355px;width:263px">اياد محمد المحمود</div>
<div class="c" style="left:305px;top:355px;width:115px">15</div>
<div class="c" style="left:421px;top:355px;width:115px">14</div>
<div class="c" style="left:537px;top:355px;width:115px">19</div>
<div class="c" style="left:653px;top:355px;width:115px">24</div>
<div class="c" style="left:769px;top:355px;width:115px">19</div>
<div class="c" style="left:885px;top:355px;width:115px">91</div>
<div class="c ar" style="left:1001px;top:355px;width:115px">ناجح</div>
<div class="c" style="left:1117px;top:355px;width:217px">6</div>
<div class="c ar" style="left:41px;top:379px;width:263px">محمود علي سحبول</div>
<div class="c" style="left:305px;top:379px;width:115px">17</div>
<div class="c" style="left:421px;top:379px;width:115px">18</div>
<div class="c" style="left:537px;top:379px;width:115px">25</div>
<div class="c" style="left:653px;top:379px;width:115px">15</div>
<div class="c" style="left:769px;top:379px;width:115px">17</div>
<div class="c" style="left:885px;top:379px;width:115px">92</div>
<div class="c ar" style="left:1001px;top:379px;width:115px">ناجح</div>
<div class="c" style="left:1117px;top:379px;width:217px">6</div>
<div class="c ar" style="left:41px;top:403px;width:263px">أحمد محمد السامر</div>
<div class="c" style="left:305px;top:403px;width:115px">22</div>
<div class="c ar" style="left:421px;top:403px;width:115px">لم يتقدم للاختبار</div>
<div class="c" style="left:537px;top:403px;width:115px">21</div>
<div class="c" style="left:653px;top:403px;width:115px">14</div>
<div class="c ar" style="left:769px;top:403px;width:115px">لم يتقدم للاختبار</div>
<div class="c" style="left:885px;top:403px;width:115px">57</div>
<div class="c ar" style="left:1001px;top:403px;width:115px">راسب</div>
<div class="c" style="left:1117px;top:403px;width:217px">4</div>
<div class="a" style="left:1116px;top:235px;width:219px;height:192px;border:1px solid #1659a6;border-top:none"></div>
<div class="a" style="left:1116px;top:210px;width:219px;height:25px;border:2px solid #000"></div>
<div class="a" style="left:1332px;top:424px;width:5px;height:5px;background:#000"></div>
<div class="a" style="left:1538px;top:164px;width:15px;height:671px;background:#515959"></div>
<div class="a" style="left:1538px;top:164px;width:15px;height:5px;background:#6d7373"></div>
<div class="a" style="left:1541px;top:166px;width:9px;height:1px;background:#050505"></div>
<div class="a" style="left:1541px;top:174px;width:9px;height:314px;background:#454c4c;border:1.5px solid #000;border-radius:4.5px"></div>
<div class="a" style="left:0;top:835px;width:1538px;height:15px;background:#515959"></div>
<div class="a" style="left:4px;top:838px;width:690px;height:9px;background:#454c4c;border:1.5px solid #000;border-radius:4.5px"></div>
<div class="a" style="left:1533px;top:835px;width:5px;height:15px;background:#6d7373"></div>
<div class="a" style="left:1535px;top:838px;width:1px;height:9px;background:#000"></div>
<div class="a" style="left:1538px;top:835px;width:15px;height:15px;background:#393e3e"></div>
<div class="a" style="left:0;top:850px;width:1553px;height:25px;background:#393e3e"></div>
<svg class="a" style="left:10px;top:852px" width="130" height="22" viewBox="0 0 130 22"><g fill="#7d8383"><rect x="4" y="2.500" width="1.800" height="17"/><path d="M14 2.500v17L5.800 11z"/><path d="M38 2.500v17L29 11z"/><path d="M54.500 2.500v17L63 11z"/><path d="M78 2.500v17L86.500 11z"/><rect x="87" y="2.500" width="1.800" height="17"/></g><path d="M114.500 2v17M106 10.500h17" stroke="#fbfbfb" stroke-width="3"/></svg>
<div class="a" style="left:143px;top:850px;width:66px;height:22px;background:#2a2b2b"></div>
<div class="a" style="left:143px;top:872px;width:66px;height:3px;background:#8d9292"></div>
<div class="t" style="left:156px;top:854.5px;font-size:13px;letter-spacing:-0.6px">Sheet1</div>
<div class="a" style="left:0;top:875px;width:1600px;height:25px;background:#393e3e"></div>
<div class="a" style="left:0;top:875px;width:1600px;height:1px;background:#6e7474"></div>
<div class="a" style="left:0;top:897px;width:1600px;height:3px;background:#2c2f2f"></div>
<div class="a" style="left:171px;top:878px;width:1px;height:18px;background:#353a3a"></div>
<div class="a" style="left:444px;top:878px;width:1px;height:18px;background:#353a3a"></div>
<div class="a" style="left:597px;top:878px;width:1px;height:18px;background:#353a3a"></div>
<div class="a" style="left:784px;top:878px;width:1px;height:18px;background:#353a3a"></div>
<div class="a" style="left:853px;top:878px;width:1px;height:18px;background:#353a3a"></div>
<div class="a" style="left:883px;top:878px;width:1px;height:18px;background:#353a3a"></div>
<div class="a" style="left:913px;top:878px;width:1px;height:18px;background:#353a3a"></div>
<div class="a" style="left:943px;top:878px;width:1px;height:18px;background:#353a3a"></div>
<div class="a" style="left:1406px;top:878px;width:1px;height:18px;background:#353a3a"></div>
<div class="a" style="left:1551px;top:878px;width:1px;height:18px;background:#353a3a"></div>
<div class="st" style="left:11.2px;letter-spacing:-0.49px">Sheet 1 of 1</div>
<div class="st" style="left:181.2px;letter-spacing:-0.3px">Selected: 9 rows, 1 column</div>
<div class="st" style="left:453.5px;letter-spacing:-0.01px">Default</div>
<div class="st" style="left:654.5px;letter-spacing:-0.53px">English (USA)</div>
<div class="st" style="left:1098.7px;letter-spacing:-0.51px">Count: 9; CountA: 9; Sum: 49</div>
<div class="st" style="left:1559.7px;letter-spacing:-0.9px">140%</div>
<svg class="a" style="left:858px;top:879px" width="60" height="16" viewBox="0 0 60 16"><g stroke="#8a9090" stroke-width="1" fill="none"><path d="M5.500 3v10M3.500 3h4M3.500 13h4"/><path d="M10 14h6"/></g><rect x="36.500" y="3" width="11" height="10" fill="#f6f6f6"/><path d="M40.500 4h3v3.500h2.300L42 11.500 38.200 7.500h2.300z" fill="#f57900" stroke="#c85a00" stroke-width="0.500"/></svg>
<svg class="a" style="left:1412px;top:880px" width="136" height="18" viewBox="0 0 136 18"><rect x="4" y="8.500" width="9" height="1" fill="#8d9292"/><rect x="19" y="8" width="98" height="2" rx="1" fill="#9a9e9e"/><rect x="66.500" y="5" width="1.500" height="8" fill="#9a9e9e"/><circle cx="74" cy="9" r="4.600" fill="#ececec" stroke="#bdbdbd" stroke-width="0.500"/><path d="M122 9h9M126.500 4.500v9" stroke="#8d9292" stroke-width="1"/></svg>
<div class="a" style="left:1553px;top:133px;width:47px;height:742px;background:#393e3e"></div>
<div class="a" style="left:1553px;top:133px;width:2px;height:741px;background:#7b8181"></div>
<div class="a" style="left:1559px;top:135px;width:2px;height:739px;background:#7b8181"></div>
<div class="a" style="left:1553px;top:872px;width:46px;height:3px;background:#7b8181"></div>
<div class="a" style="left:1553px;top:133px;width:46px;height:2px;background:#7b8181"></div>
<div class="a" style="left:1553px;top:467px;width:8px;height:73px;background:#949898"></div>
<div class="a" style="left:1555px;top:500.5px;width:0;height:0;border-top:3.5px solid transparent;border-bottom:3.5px solid transparent;border-left:4.5px solid #4a5050"></div>
<div class="a" style="left:1569px;top:172px;width:22px;height:1px;background:#2c3030"></div>
<div class="a" style="left:1564px;top:176px;width:33px;height:32px;border:1px solid #d8d8d8;border-radius:4px"></div>
<svg class="ic" style="left:1568px;top:141px" viewBox="0 0 24 24"><g fill="#ececec"><rect x="9.700" y="1" width="4.600" height="5" rx="0.800" transform="rotate(0 12 12)"/><rect x="9.700" y="1" width="4.600" height="5" rx="0.800" transform="rotate(45 12 12)"/><rect x="9.700" y="1" width="4.600" height="5" rx="0.800" transform="rotate(90 12 12)"/><rect x="9.700" y="1" width="4.600" height="5" rx="0.800" transform="rotate(135 12 12)"/><rect x="9.700" y="1" width="4.600" height="5" rx="0.800" transform="rotate(180 12 12)"/><rect x="9.700" y="1" width="4.600" height="5" rx="0.800" transform="rotate(225 12 12)"/><rect x="9.700" y="1" width="4.600" height="5" rx="0.800" transform="rotate(270 12 12)"/><rect x="9.700" y="1" width="4.600" height="5" rx="0.800" transform="rotate(315 12 12)"/></g><circle cx="12" cy="12" r="6.300" fill="none" stroke="#ececec" stroke-width="5.800"/><circle cx="12" cy="12" r="5.500" fill="none" stroke="#d6d6d6" stroke-width="1.600"/></svg>
<svg class="ic" style="left:1568px;top:180px" viewBox="0 0 24 24"><rect x="3" y="3" width="18" height="18" fill="#e6e6e6" stroke="#c4c4c4" stroke-width="0.600"/><rect x="5" y="9" width="14" height="7" rx="3.500" fill="#3d8de8"/><circle cx="15.600" cy="12.500" r="2.600" fill="#f8f8f8"/></svg>
<svg class="ic" style="left:1568px;top:215px" viewBox="0 0 24 24"><path d="M12.34 15.6 11.09 12H5.71L4.46 15.6H1.51L6.66 1.5H10.14L15.26 15.6ZM8.4 3.67 8.34 3.89Q8.24 4.25 8.1 4.71Q7.96 5.17 6.38 9.77H10.43L9.04 5.72L8.61 4.36Z" fill="#5a5d5d" stroke="#202323" stroke-width="0.6" paint-order="stroke" stroke-linejoin="round"/><path d="M23.800 7l-8.300 10.800-2-1.600z" fill="#d86a1a" stroke="#8a4a0a" stroke-width="0.400"/><path d="M15.500 17.800l-2-1.600c-1.400.6-2.300 1.800-2.600 3.300-.4 1.300-1.200 2.200-2.300 2.700 3.200.6 6.200-.6 6.900-4.400z" fill="#ef6ad6" stroke="#b83fa0" stroke-width="0.400"/></svg>
<svg class="ic" style="left:1568px;top:250px" viewBox="0 0 24 24"><rect x="3" y="2" width="19" height="15" fill="#3d8de8" stroke="#f0f0f0" stroke-width="1" transform="rotate(6 12 10)"/><rect x="1.500" y="6" width="21" height="16" fill="#f4f4f4" stroke="#c8c8c8" stroke-width="0.500"/><rect x="3.300" y="7.800" width="17.400" height="12.400" fill="url(#gSky)"/><path d="M3.300 14.500c3-1.500 5.500 1 8.500-.5s5.500-2 8.900-.8v7H3.300z" fill="#f0b24a"/><path d="M3.300 14c3-1.500 5.500 1 8.500-.5s5.500-2 8.900-.8" stroke="#fff" stroke-width="0.900" fill="none"/><path d="M8 15l.7 1.400 1.500.2-1.100 1.100.300 1.500L8 18.500l-1.400.700.300-1.500-1.100-1.100 1.500-.2z" fill="#e8301c"/></svg>
<svg class="ic" style="left:1568px;top:285px" viewBox="0 0 24 24"><circle cx="12" cy="12" r="9.800" fill="#3a4a78" stroke="#b9b9b9" stroke-width="2.200"/><path d="M12 3.500l1.800 8.500-1.800 8.500-1.800-8.500z" fill="#f4f4f4"/><path d="M3.500 12l8.500-1.800 8.500 1.800-8.500 1.800z" fill="#e8e8e8"/><path d="M5 5l8.500 5.500-3 3z" fill="#e8303a"/><path d="M19 19l-8.500-5.500 3-3z" fill="#f4f4f4"/><path d="M19 5l-5.500 8.500-3-3zM5 19l5.500-8.500 3 3z" fill="#e8303a" opacity="0.850"/><circle cx="12" cy="12" r="1.300" fill="#fff"/></svg>
<svg class="ic" style="left:1568px;top:321px" viewBox="0 0 24 24"><path d="M8.74 9.71 6.93 19H5.17L6.98 9.71H5.5L5.75 8.43H7.23L7.46 7.24Q7.68 6.15 8.05 5.61Q8.42 5.06 9.02 4.79Q9.63 4.51 10.57 4.51Q11.3 4.51 11.79 4.62L11.53 5.96L11.09 5.9L10.64 5.88Q10.03 5.88 9.7 6.2Q9.37 6.52 9.18 7.49L8.99 8.43H11.05L10.8 9.71Z" fill="#535858" stroke="#2c3030" stroke-width="0.4" paint-order="stroke" stroke-linejoin="round"/><path d="M12.22 17.77Q12.22 16.29 12.66 15.11Q13.1 13.93 14.02 12.89H14.86Q13.95 13.96 13.53 15.16Q13.1 16.36 13.1 17.78Q13.1 19.2 13.52 20.4Q13.94 21.59 14.86 22.67H14.02Q13.1 21.63 12.66 20.45Q12.22 19.26 12.22 17.79ZM18.82 20.5 17.41 18.22 15.98 20.5H15.03L16.91 17.65L15.12 14.95H16.09L17.41 17.11L18.71 14.95H19.69L17.9 17.64L19.8 20.5ZM22.61 17.79Q22.61 19.27 22.17 20.45Q21.73 21.63 20.82 22.67H19.97Q20.88 21.6 21.31 20.41Q21.73 19.21 21.73 17.78Q21.73 16.35 21.3 15.16Q20.88 13.96 19.97 12.89H20.82Q21.74 13.94 22.17 15.12Q22.61 16.3 22.61 17.77Z" fill="#535858" stroke="#2c3030" stroke-width="0.3" paint-order="stroke" stroke-linejoin="round"/></svg>
</body></html>
